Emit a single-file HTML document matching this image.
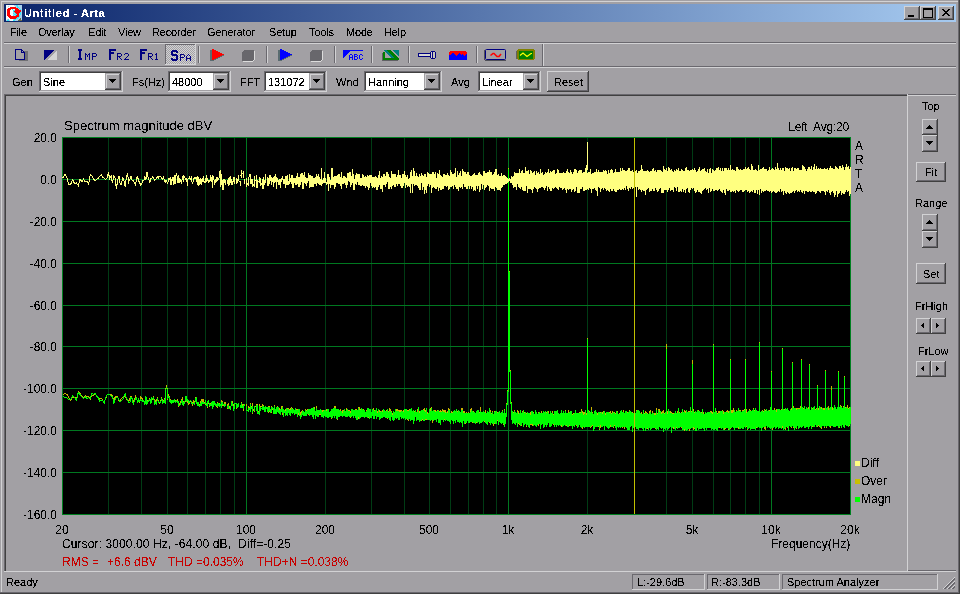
<!DOCTYPE html><html><head><meta charset="utf-8"><style>
html,body{margin:0;padding:0;}
body{width:960px;height:594px;overflow:hidden;position:relative;background:#a2a0a4;font-family:"Liberation Sans",sans-serif;}
div,span,svg{position:absolute;}
span{white-space:pre;}
</style></head><body>
<div style="left:1px;top:1px;width:957px;height:1px;background:#d2d2d4;"></div><div style="left:1px;top:1px;width:1px;height:591px;background:#d2d2d4;"></div><div style="left:958px;top:0px;width:1px;height:593px;background:#6a686e;"></div><div style="left:0px;top:592px;width:959px;height:1px;background:#6a686e;"></div><div style="left:959px;top:0px;width:1px;height:594px;background:#404040;"></div><div style="left:0px;top:593px;width:960px;height:1px;background:#404040;"></div><div style="left:4px;top:4px;width:952px;height:18px;background:linear-gradient(to right,#0a246a,#a6caf0);"></div><svg style="position:absolute;left:6px;top:5px" width="16" height="16" viewBox="0 0 16 16" shape-rendering="crispEdges"><rect x="0" y="0" width="8" height="1" fill="#f4fbff"/><rect x="8" y="0" width="2" height="1" fill="#a8d0ec"/><rect x="10" y="0" width="2" height="1" fill="#30e8f8"/><rect x="12" y="0" width="4" height="1" fill="#a8d0ec"/><rect x="0" y="1" width="2" height="1" fill="#f4fbff"/><rect x="2" y="1" width="1" height="1" fill="#a8d0ec"/><rect x="3" y="1" width="6" height="1" fill="#f4fbff"/><rect x="9" y="1" width="2" height="1" fill="#a8d0ec"/><rect x="11" y="1" width="1" height="1" fill="#30e8f8"/><rect x="12" y="1" width="4" height="1" fill="#a8d0ec"/><rect x="0" y="2" width="4" height="1" fill="#f4fbff"/><rect x="4" y="2" width="6" height="1" fill="#ff0000"/><rect x="10" y="2" width="1" height="1" fill="#a8d0ec"/><rect x="11" y="2" width="2" height="1" fill="#30e8f8"/><rect x="13" y="2" width="3" height="1" fill="#a8d0ec"/><rect x="0" y="3" width="2" height="1" fill="#f4fbff"/><rect x="2" y="3" width="10" height="1" fill="#ff0000"/><rect x="12" y="3" width="1" height="1" fill="#a8d0ec"/><rect x="13" y="3" width="1" height="1" fill="#30e8f8"/><rect x="14" y="3" width="2" height="1" fill="#a8d0ec"/><rect x="0" y="4" width="1" height="1" fill="#f4fbff"/><rect x="1" y="4" width="4" height="1" fill="#ff0000"/><rect x="5" y="4" width="1" height="1" fill="#f4fbff"/><rect x="6" y="4" width="1" height="1" fill="#30e8f8"/><rect x="7" y="4" width="2" height="1" fill="#f4fbff"/><rect x="9" y="4" width="4" height="1" fill="#ff0000"/><rect x="13" y="4" width="1" height="1" fill="#a8d0ec"/><rect x="14" y="4" width="1" height="1" fill="#30e8f8"/><rect x="15" y="4" width="1" height="1" fill="#a8d0ec"/><rect x="0" y="5" width="1" height="1" fill="#f4fbff"/><rect x="1" y="5" width="3" height="1" fill="#ff0000"/><rect x="4" y="5" width="3" height="1" fill="#f4fbff"/><rect x="7" y="5" width="2" height="1" fill="#30e8f8"/><rect x="9" y="5" width="6" height="1" fill="#ff0000"/><rect x="15" y="5" width="1" height="1" fill="#a8d0ec"/><rect x="0" y="6" width="1" height="1" fill="#f4fbff"/><rect x="1" y="6" width="3" height="1" fill="#ff0000"/><rect x="4" y="6" width="3" height="1" fill="#f4fbff"/><rect x="7" y="6" width="1" height="1" fill="#30e8f8"/><rect x="8" y="6" width="7" height="1" fill="#ff0000"/><rect x="15" y="6" width="1" height="1" fill="#a8d0ec"/><rect x="0" y="7" width="1" height="1" fill="#f4fbff"/><rect x="1" y="7" width="3" height="1" fill="#ff0000"/><rect x="4" y="7" width="3" height="1" fill="#f4fbff"/><rect x="7" y="7" width="1" height="1" fill="#a8d0ec"/><rect x="8" y="7" width="1" height="1" fill="#30e8f8"/><rect x="9" y="7" width="5" height="1" fill="#ff0000"/><rect x="14" y="7" width="1" height="1" fill="#30e8f8"/><rect x="15" y="7" width="1" height="1" fill="#a8d0ec"/><rect x="0" y="8" width="1" height="1" fill="#f4fbff"/><rect x="1" y="8" width="3" height="1" fill="#ff0000"/><rect x="4" y="8" width="3" height="1" fill="#f4fbff"/><rect x="7" y="8" width="1" height="1" fill="#30e8f8"/><rect x="8" y="8" width="1" height="1" fill="#a8d0ec"/><rect x="9" y="8" width="1" height="1" fill="#30e8f8"/><rect x="10" y="8" width="3" height="1" fill="#ff0000"/><rect x="13" y="8" width="2" height="1" fill="#30e8f8"/><rect x="15" y="8" width="1" height="1" fill="#a8d0ec"/><rect x="0" y="9" width="1" height="1" fill="#f4fbff"/><rect x="1" y="9" width="3" height="1" fill="#ff0000"/><rect x="4" y="9" width="3" height="1" fill="#f4fbff"/><rect x="7" y="9" width="1" height="1" fill="#a8d0ec"/><rect x="8" y="9" width="3" height="1" fill="#30e8f8"/><rect x="11" y="9" width="2" height="1" fill="#ff0000"/><rect x="13" y="9" width="1" height="1" fill="#a8d0ec"/><rect x="14" y="9" width="1" height="1" fill="#30e8f8"/><rect x="15" y="9" width="1" height="1" fill="#a8d0ec"/><rect x="0" y="10" width="1" height="1" fill="#f4fbff"/><rect x="1" y="10" width="4" height="1" fill="#ff0000"/><rect x="5" y="10" width="2" height="1" fill="#f4fbff"/><rect x="7" y="10" width="1" height="1" fill="#30e8f8"/><rect x="8" y="10" width="1" height="1" fill="#a8d0ec"/><rect x="9" y="10" width="1" height="1" fill="#30e8f8"/><rect x="10" y="10" width="3" height="1" fill="#ff0000"/><rect x="13" y="10" width="1" height="1" fill="#30e8f8"/><rect x="14" y="10" width="2" height="1" fill="#a8d0ec"/><rect x="0" y="11" width="2" height="1" fill="#f4fbff"/><rect x="2" y="11" width="11" height="1" fill="#ff0000"/><rect x="13" y="11" width="1" height="1" fill="#30e8f8"/><rect x="14" y="11" width="2" height="1" fill="#a8d0ec"/><rect x="0" y="12" width="3" height="1" fill="#f4fbff"/><rect x="3" y="12" width="8" height="1" fill="#ff0000"/><rect x="11" y="12" width="2" height="1" fill="#30e8f8"/><rect x="13" y="12" width="3" height="1" fill="#a8d0ec"/><rect x="0" y="13" width="4" height="1" fill="#f4fbff"/><rect x="4" y="13" width="6" height="1" fill="#ff0000"/><rect x="10" y="13" width="2" height="1" fill="#30e8f8"/><rect x="12" y="13" width="2" height="1" fill="#a8d0ec"/><rect x="14" y="13" width="1" height="1" fill="#68684c"/><rect x="15" y="13" width="1" height="1" fill="#a8d0ec"/><rect x="0" y="14" width="1" height="1" fill="#f4fbff"/><rect x="1" y="14" width="1" height="1" fill="#a8d0ec"/><rect x="2" y="14" width="1" height="1" fill="#30e8f8"/><rect x="3" y="14" width="4" height="1" fill="#f4fbff"/><rect x="7" y="14" width="1" height="1" fill="#a8d0ec"/><rect x="8" y="14" width="2" height="1" fill="#30e8f8"/><rect x="10" y="14" width="3" height="1" fill="#a8d0ec"/><rect x="13" y="14" width="2" height="1" fill="#68684c"/><rect x="15" y="14" width="1" height="1" fill="#a8d0ec"/><rect x="0" y="15" width="1" height="1" fill="#a8d0ec"/><rect x="1" y="15" width="2" height="1" fill="#30e8f8"/><rect x="3" y="15" width="1" height="1" fill="#a8d0ec"/><rect x="4" y="15" width="3" height="1" fill="#f4fbff"/><rect x="7" y="15" width="2" height="1" fill="#30e8f8"/><rect x="9" y="15" width="3" height="1" fill="#a8d0ec"/><rect x="12" y="15" width="4" height="1" fill="#68684c"/></svg><div style="left:904px;top:6px;width:16px;height:14px;background:#a2a0a4;"></div><div style="left:904px;top:6px;width:16px;height:1px;background:#d2d2d4;"></div><div style="left:904px;top:6px;width:1px;height:14px;background:#d2d2d4;"></div><div style="left:904px;top:19px;width:16px;height:1px;background:#404040;"></div><div style="left:919px;top:6px;width:1px;height:14px;background:#404040;"></div><div style="left:905px;top:18px;width:14px;height:1px;background:#6a686e;"></div><div style="left:918px;top:7px;width:1px;height:12px;background:#6a686e;"></div><svg style="position:absolute;left:904px;top:6px" width="16" height="14" viewBox="0 0 16 14" shape-rendering="crispEdges"><rect x="4" y="9" width="6" height="2" fill="#000"/></svg><div style="left:920px;top:6px;width:16px;height:14px;background:#a2a0a4;"></div><div style="left:920px;top:6px;width:16px;height:1px;background:#d2d2d4;"></div><div style="left:920px;top:6px;width:1px;height:14px;background:#d2d2d4;"></div><div style="left:920px;top:19px;width:16px;height:1px;background:#404040;"></div><div style="left:935px;top:6px;width:1px;height:14px;background:#404040;"></div><div style="left:921px;top:18px;width:14px;height:1px;background:#6a686e;"></div><div style="left:934px;top:7px;width:1px;height:12px;background:#6a686e;"></div><svg style="position:absolute;left:920px;top:6px" width="16" height="14" viewBox="0 0 16 14" shape-rendering="crispEdges"><rect x="3" y="2" width="9" height="9" fill="none" stroke="#000" stroke-width="1" transform="translate(0.5 0.5)"/><rect x="3" y="2" width="9" height="2" fill="#000"/></svg><div style="left:938px;top:6px;width:16px;height:14px;background:#a2a0a4;"></div><div style="left:938px;top:6px;width:16px;height:1px;background:#d2d2d4;"></div><div style="left:938px;top:6px;width:1px;height:14px;background:#d2d2d4;"></div><div style="left:938px;top:19px;width:16px;height:1px;background:#404040;"></div><div style="left:953px;top:6px;width:1px;height:14px;background:#404040;"></div><div style="left:939px;top:18px;width:14px;height:1px;background:#6a686e;"></div><div style="left:952px;top:7px;width:1px;height:12px;background:#6a686e;"></div><svg style="position:absolute;left:938px;top:6px" width="16" height="14" viewBox="0 0 16 14" shape-rendering="crispEdges"><rect x="4" y="3" width="2" height="1" fill="#000"/><rect x="10" y="3" width="2" height="1" fill="#000"/><rect x="5" y="4" width="2" height="1" fill="#000"/><rect x="9" y="4" width="2" height="1" fill="#000"/><rect x="6" y="5" width="2" height="1" fill="#000"/><rect x="8" y="5" width="2" height="1" fill="#000"/><rect x="7" y="6" width="2" height="1" fill="#000"/><rect x="7" y="6" width="2" height="1" fill="#000"/><rect x="8" y="7" width="2" height="1" fill="#000"/><rect x="6" y="7" width="2" height="1" fill="#000"/><rect x="9" y="8" width="2" height="1" fill="#000"/><rect x="5" y="8" width="2" height="1" fill="#000"/><rect x="10" y="9" width="2" height="1" fill="#000"/><rect x="4" y="9" width="2" height="1" fill="#000"/></svg><div style="left:4px;top:42px;width:952px;height:1px;background:#6a686e;"></div><div style="left:4px;top:43px;width:952px;height:1px;background:#d2d2d4;"></div><div style="left:4px;top:66px;width:952px;height:1px;background:#6a686e;"></div><div style="left:4px;top:67px;width:952px;height:1px;background:#d2d2d4;"></div><div style="left:542px;top:44px;width:1px;height:22px;background:#6a686e;"></div><div style="left:543px;top:44px;width:1px;height:22px;background:#d2d2d4;"></div><div style="left:68px;top:46px;width:1px;height:17px;background:#6a686e;"></div><div style="left:69px;top:46px;width:1px;height:17px;background:#d2d2d4;"></div><div style="left:198px;top:46px;width:1px;height:17px;background:#6a686e;"></div><div style="left:199px;top:46px;width:1px;height:17px;background:#d2d2d4;"></div><div style="left:266px;top:46px;width:1px;height:17px;background:#6a686e;"></div><div style="left:267px;top:46px;width:1px;height:17px;background:#d2d2d4;"></div><div style="left:334px;top:46px;width:1px;height:17px;background:#6a686e;"></div><div style="left:335px;top:46px;width:1px;height:17px;background:#d2d2d4;"></div><div style="left:371px;top:46px;width:1px;height:17px;background:#6a686e;"></div><div style="left:372px;top:46px;width:1px;height:17px;background:#d2d2d4;"></div><div style="left:408px;top:46px;width:1px;height:17px;background:#6a686e;"></div><div style="left:409px;top:46px;width:1px;height:17px;background:#d2d2d4;"></div><div style="left:476px;top:46px;width:1px;height:17px;background:#6a686e;"></div><div style="left:477px;top:46px;width:1px;height:17px;background:#d2d2d4;"></div><svg style="position:absolute;left:0px;top:0px" width="560" height="68" viewBox="0 0 560 68" shape-rendering="crispEdges"><rect x="19" y="51" width="9" height="10" fill="#707074"/><path d="M15.5 49.5 H21.5 L24.5 52.5 V59.5 H15.5 Z" fill="#a2a0a4" stroke="#000080" stroke-width="1"/><path d="M21.5 49.5 V52.5 H24.5" fill="none" stroke="#000080" stroke-width="1"/><path d="M44 50 H54 L44 60 Z" fill="#000080"/><path d="M57 50 V60 H47 Z" fill="#d4d4d4"/><rect x="78" y="49" width="4" height="1" fill="#000080"/><rect x="78" y="50" width="4" height="1" fill="#000080"/><rect x="79" y="51" width="2" height="1" fill="#000080"/><rect x="79" y="52" width="2" height="1" fill="#000080"/><rect x="79" y="53" width="2" height="1" fill="#000080"/><rect x="79" y="54" width="2" height="1" fill="#000080"/><rect x="79" y="55" width="2" height="1" fill="#000080"/><rect x="79" y="56" width="2" height="1" fill="#000080"/><rect x="79" y="57" width="2" height="1" fill="#000080"/><rect x="78" y="58" width="4" height="1" fill="#000080"/><rect x="78" y="59" width="4" height="1" fill="#000080"/><rect x="85" y="53" width="1" height="1" fill="#000080"/><rect x="89" y="53" width="1" height="1" fill="#000080"/><rect x="85" y="54" width="2" height="1" fill="#000080"/><rect x="88" y="54" width="2" height="1" fill="#000080"/><rect x="85" y="55" width="1" height="1" fill="#000080"/><rect x="87" y="55" width="1" height="1" fill="#000080"/><rect x="89" y="55" width="1" height="1" fill="#000080"/><rect x="85" y="56" width="1" height="1" fill="#000080"/><rect x="87" y="56" width="1" height="1" fill="#000080"/><rect x="89" y="56" width="1" height="1" fill="#000080"/><rect x="85" y="57" width="1" height="1" fill="#000080"/><rect x="89" y="57" width="1" height="1" fill="#000080"/><rect x="85" y="58" width="1" height="1" fill="#000080"/><rect x="89" y="58" width="1" height="1" fill="#000080"/><rect x="85" y="59" width="1" height="1" fill="#000080"/><rect x="89" y="59" width="1" height="1" fill="#000080"/><rect x="92" y="53" width="4" height="1" fill="#000080"/><rect x="92" y="54" width="1" height="1" fill="#000080"/><rect x="96" y="54" width="1" height="1" fill="#000080"/><rect x="92" y="55" width="1" height="1" fill="#000080"/><rect x="96" y="55" width="1" height="1" fill="#000080"/><rect x="92" y="56" width="4" height="1" fill="#000080"/><rect x="92" y="57" width="1" height="1" fill="#000080"/><rect x="92" y="58" width="1" height="1" fill="#000080"/><rect x="92" y="59" width="1" height="1" fill="#000080"/><rect x="109" y="49" width="7" height="1" fill="#000080"/><rect x="109" y="50" width="7" height="1" fill="#000080"/><rect x="109" y="51" width="2" height="1" fill="#000080"/><rect x="109" y="52" width="5" height="1" fill="#000080"/><rect x="109" y="53" width="5" height="1" fill="#000080"/><rect x="109" y="54" width="2" height="1" fill="#000080"/><rect x="109" y="55" width="2" height="1" fill="#000080"/><rect x="109" y="56" width="2" height="1" fill="#000080"/><rect x="109" y="57" width="2" height="1" fill="#000080"/><rect x="109" y="58" width="2" height="1" fill="#000080"/><rect x="109" y="59" width="2" height="1" fill="#000080"/><rect x="117" y="53" width="4" height="1" fill="#000080"/><rect x="117" y="54" width="1" height="1" fill="#000080"/><rect x="121" y="54" width="1" height="1" fill="#000080"/><rect x="117" y="55" width="1" height="1" fill="#000080"/><rect x="121" y="55" width="1" height="1" fill="#000080"/><rect x="117" y="56" width="4" height="1" fill="#000080"/><rect x="117" y="57" width="1" height="1" fill="#000080"/><rect x="119" y="57" width="1" height="1" fill="#000080"/><rect x="117" y="58" width="1" height="1" fill="#000080"/><rect x="120" y="58" width="1" height="1" fill="#000080"/><rect x="117" y="59" width="1" height="1" fill="#000080"/><rect x="121" y="59" width="1" height="1" fill="#000080"/><rect x="125" y="53" width="3" height="1" fill="#000080"/><rect x="124" y="54" width="1" height="1" fill="#000080"/><rect x="128" y="54" width="1" height="1" fill="#000080"/><rect x="128" y="55" width="1" height="1" fill="#000080"/><rect x="127" y="56" width="1" height="1" fill="#000080"/><rect x="126" y="57" width="1" height="1" fill="#000080"/><rect x="125" y="58" width="1" height="1" fill="#000080"/><rect x="124" y="59" width="5" height="1" fill="#000080"/><rect x="140" y="49" width="7" height="1" fill="#000080"/><rect x="140" y="50" width="7" height="1" fill="#000080"/><rect x="140" y="51" width="2" height="1" fill="#000080"/><rect x="140" y="52" width="5" height="1" fill="#000080"/><rect x="140" y="53" width="5" height="1" fill="#000080"/><rect x="140" y="54" width="2" height="1" fill="#000080"/><rect x="140" y="55" width="2" height="1" fill="#000080"/><rect x="140" y="56" width="2" height="1" fill="#000080"/><rect x="140" y="57" width="2" height="1" fill="#000080"/><rect x="140" y="58" width="2" height="1" fill="#000080"/><rect x="140" y="59" width="2" height="1" fill="#000080"/><rect x="148" y="53" width="4" height="1" fill="#000080"/><rect x="148" y="54" width="1" height="1" fill="#000080"/><rect x="152" y="54" width="1" height="1" fill="#000080"/><rect x="148" y="55" width="1" height="1" fill="#000080"/><rect x="152" y="55" width="1" height="1" fill="#000080"/><rect x="148" y="56" width="4" height="1" fill="#000080"/><rect x="148" y="57" width="1" height="1" fill="#000080"/><rect x="150" y="57" width="1" height="1" fill="#000080"/><rect x="148" y="58" width="1" height="1" fill="#000080"/><rect x="151" y="58" width="1" height="1" fill="#000080"/><rect x="148" y="59" width="1" height="1" fill="#000080"/><rect x="152" y="59" width="1" height="1" fill="#000080"/><rect x="156" y="53" width="1" height="1" fill="#000080"/><rect x="155" y="54" width="2" height="1" fill="#000080"/><rect x="156" y="55" width="1" height="1" fill="#000080"/><rect x="156" y="56" width="1" height="1" fill="#000080"/><rect x="156" y="57" width="1" height="1" fill="#000080"/><rect x="156" y="58" width="1" height="1" fill="#000080"/><rect x="155" y="59" width="3" height="1" fill="#000080"/></svg><div style="left:165px;top:44px;width:31px;height:21px;background:#c8c6ca;"></div><div style="left:166px;top:45px;width:29px;height:19px;background-image:linear-gradient(45deg,#a2a0a4 25%,transparent 25%,transparent 75%,#a2a0a4 75%),linear-gradient(45deg,#a2a0a4 25%,transparent 25%,transparent 75%,#a2a0a4 75%);background-size:2px 2px;background-position:0 0,1px 1px;background-color:#d2d2d4"></div><div style="left:165px;top:44px;width:31px;height:1px;background:#6a686e;"></div><div style="left:165px;top:44px;width:1px;height:21px;background:#6a686e;"></div><div style="left:165px;top:64px;width:31px;height:1px;background:#d2d2d4;"></div><div style="left:195px;top:44px;width:1px;height:21px;background:#d2d2d4;"></div><svg style="position:absolute;left:0px;top:0px" width="560" height="68" viewBox="0 0 560 68" shape-rendering="crispEdges"><rect x="172" y="50" width="5" height="1" fill="#000080"/><rect x="171" y="51" width="7" height="1" fill="#000080"/><rect x="171" y="52" width="2" height="1" fill="#000080"/><rect x="176" y="52" width="2" height="1" fill="#000080"/><rect x="171" y="53" width="2" height="1" fill="#000080"/><rect x="171" y="54" width="6" height="1" fill="#000080"/><rect x="172" y="55" width="6" height="1" fill="#000080"/><rect x="176" y="56" width="2" height="1" fill="#000080"/><rect x="176" y="57" width="2" height="1" fill="#000080"/><rect x="171" y="58" width="2" height="1" fill="#000080"/><rect x="176" y="58" width="2" height="1" fill="#000080"/><rect x="171" y="59" width="7" height="1" fill="#000080"/><rect x="172" y="60" width="5" height="1" fill="#000080"/><rect x="180" y="54" width="4" height="1" fill="#000080"/><rect x="180" y="55" width="1" height="1" fill="#000080"/><rect x="184" y="55" width="1" height="1" fill="#000080"/><rect x="180" y="56" width="1" height="1" fill="#000080"/><rect x="184" y="56" width="1" height="1" fill="#000080"/><rect x="180" y="57" width="4" height="1" fill="#000080"/><rect x="180" y="58" width="1" height="1" fill="#000080"/><rect x="180" y="59" width="1" height="1" fill="#000080"/><rect x="180" y="60" width="1" height="1" fill="#000080"/><rect x="188" y="54" width="1" height="1" fill="#000080"/><rect x="187" y="55" width="1" height="1" fill="#000080"/><rect x="189" y="55" width="1" height="1" fill="#000080"/><rect x="186" y="56" width="1" height="1" fill="#000080"/><rect x="190" y="56" width="1" height="1" fill="#000080"/><rect x="186" y="57" width="1" height="1" fill="#000080"/><rect x="190" y="57" width="1" height="1" fill="#000080"/><rect x="186" y="58" width="5" height="1" fill="#000080"/><rect x="186" y="59" width="1" height="1" fill="#000080"/><rect x="190" y="59" width="1" height="1" fill="#000080"/><rect x="186" y="60" width="1" height="1" fill="#000080"/><rect x="190" y="60" width="1" height="1" fill="#000080"/><rect x="210" y="50" width="2" height="1" fill="#5a6c70"/><rect x="210" y="51" width="2" height="1" fill="#5a6c70"/><rect x="210" y="52" width="2" height="1" fill="#5a6c70"/><rect x="210" y="53" width="2" height="1" fill="#5a6c70"/><rect x="210" y="54" width="2" height="1" fill="#5a6c70"/><rect x="210" y="55" width="2" height="1" fill="#5a6c70"/><rect x="222" y="55" width="2" height="1" fill="#5a6c70"/><rect x="210" y="56" width="2" height="1" fill="#5a6c70"/><rect x="220" y="56" width="2" height="1" fill="#5a6c70"/><rect x="210" y="57" width="2" height="1" fill="#5a6c70"/><rect x="218" y="57" width="2" height="1" fill="#5a6c70"/><rect x="210" y="58" width="2" height="1" fill="#5a6c70"/><rect x="216" y="58" width="2" height="1" fill="#5a6c70"/><rect x="210" y="59" width="2" height="1" fill="#5a6c70"/><rect x="214" y="59" width="2" height="1" fill="#5a6c70"/><rect x="210" y="60" width="2" height="1" fill="#5a6c70"/><rect x="212" y="60" width="2" height="1" fill="#5a6c70"/><rect x="210" y="60" width="4" height="1" fill="#5a6c70"/><rect x="212" y="49" width="2" height="1" fill="#ff0000"/><rect x="212" y="50" width="4" height="1" fill="#ff0000"/><rect x="212" y="51" width="6" height="1" fill="#ff0000"/><rect x="212" y="52" width="8" height="1" fill="#ff0000"/><rect x="212" y="53" width="10" height="1" fill="#ff0000"/><rect x="212" y="54" width="12" height="1" fill="#ff0000"/><rect x="212" y="55" width="10" height="1" fill="#ff0000"/><rect x="212" y="56" width="8" height="1" fill="#ff0000"/><rect x="212" y="57" width="6" height="1" fill="#ff0000"/><rect x="212" y="58" width="4" height="1" fill="#ff0000"/><rect x="212" y="59" width="2" height="1" fill="#ff0000"/><rect x="254" y="51" width="1" height="9" fill="#dcdcdc"/><rect x="243" y="61" width="10" height="1" fill="#dcdcdc"/><rect x="253" y="60" width="1" height="1" fill="#dcdcdc"/><path d="M244 50 H254 V60 H253 V61 H242 V52 H243 V51 H244 Z" fill="#68676c"/><rect x="278" y="50" width="2" height="1" fill="#5a6c70"/><rect x="278" y="51" width="2" height="1" fill="#5a6c70"/><rect x="278" y="52" width="2" height="1" fill="#5a6c70"/><rect x="278" y="53" width="2" height="1" fill="#5a6c70"/><rect x="278" y="54" width="2" height="1" fill="#5a6c70"/><rect x="278" y="55" width="2" height="1" fill="#5a6c70"/><rect x="290" y="55" width="2" height="1" fill="#5a6c70"/><rect x="278" y="56" width="2" height="1" fill="#5a6c70"/><rect x="288" y="56" width="2" height="1" fill="#5a6c70"/><rect x="278" y="57" width="2" height="1" fill="#5a6c70"/><rect x="286" y="57" width="2" height="1" fill="#5a6c70"/><rect x="278" y="58" width="2" height="1" fill="#5a6c70"/><rect x="284" y="58" width="2" height="1" fill="#5a6c70"/><rect x="278" y="59" width="2" height="1" fill="#5a6c70"/><rect x="282" y="59" width="2" height="1" fill="#5a6c70"/><rect x="278" y="60" width="2" height="1" fill="#5a6c70"/><rect x="280" y="60" width="2" height="1" fill="#5a6c70"/><rect x="278" y="60" width="4" height="1" fill="#5a6c70"/><rect x="280" y="49" width="2" height="1" fill="#0000ff"/><rect x="280" y="50" width="4" height="1" fill="#0000ff"/><rect x="280" y="51" width="6" height="1" fill="#0000ff"/><rect x="280" y="52" width="8" height="1" fill="#0000ff"/><rect x="280" y="53" width="10" height="1" fill="#0000ff"/><rect x="280" y="54" width="12" height="1" fill="#0000ff"/><rect x="280" y="55" width="10" height="1" fill="#0000ff"/><rect x="280" y="56" width="8" height="1" fill="#0000ff"/><rect x="280" y="57" width="6" height="1" fill="#0000ff"/><rect x="280" y="58" width="4" height="1" fill="#0000ff"/><rect x="280" y="59" width="2" height="1" fill="#0000ff"/><rect x="322" y="51" width="1" height="9" fill="#dcdcdc"/><rect x="311" y="61" width="10" height="1" fill="#dcdcdc"/><rect x="321" y="60" width="1" height="1" fill="#dcdcdc"/><path d="M312 50 H322 V60 H321 V61 H310 V52 H311 V51 H312 Z" fill="#68676c"/><rect x="343" y="50" width="20" height="1" fill="#0000ff"/><path d="M343 50 H351 L343 58 Z" fill="#0000ff"/><rect x="350" y="54" width="2" height="1" fill="#0000ff"/><rect x="349" y="55" width="1" height="1" fill="#0000ff"/><rect x="352" y="55" width="1" height="1" fill="#0000ff"/><rect x="349" y="56" width="1" height="1" fill="#0000ff"/><rect x="352" y="56" width="1" height="1" fill="#0000ff"/><rect x="349" y="57" width="4" height="1" fill="#0000ff"/><rect x="349" y="58" width="1" height="1" fill="#0000ff"/><rect x="352" y="58" width="1" height="1" fill="#0000ff"/><rect x="349" y="59" width="1" height="1" fill="#0000ff"/><rect x="352" y="59" width="1" height="1" fill="#0000ff"/><rect x="354" y="54" width="3" height="1" fill="#0000ff"/><rect x="354" y="55" width="1" height="1" fill="#0000ff"/><rect x="357" y="55" width="1" height="1" fill="#0000ff"/><rect x="354" y="56" width="3" height="1" fill="#0000ff"/><rect x="354" y="57" width="1" height="1" fill="#0000ff"/><rect x="357" y="57" width="1" height="1" fill="#0000ff"/><rect x="354" y="58" width="1" height="1" fill="#0000ff"/><rect x="357" y="58" width="1" height="1" fill="#0000ff"/><rect x="354" y="59" width="3" height="1" fill="#0000ff"/><rect x="360" y="54" width="2" height="1" fill="#0000ff"/><rect x="359" y="55" width="1" height="1" fill="#0000ff"/><rect x="362" y="55" width="1" height="1" fill="#0000ff"/><rect x="359" y="56" width="1" height="1" fill="#0000ff"/><rect x="359" y="57" width="1" height="1" fill="#0000ff"/><rect x="359" y="58" width="1" height="1" fill="#0000ff"/><rect x="362" y="58" width="1" height="1" fill="#0000ff"/><rect x="360" y="59" width="2" height="1" fill="#0000ff"/><path d="M382 53 H383 V60 H398 V61 H382 Z" fill="#606064"/><path d="M392 50 H399 V57 Z" fill="#008080"/><path d="M383 50 H386 L394 58 H391 L383 50 Z" fill="#008080"/><path d="M387 50 H390 L399 59 V60 H396 Z" fill="#008000"/><path d="M383 52 H385 V58 H397 L399 60 H383 Z" fill="#008000"/><rect x="418" y="53" width="13" height="4" fill="#000080"/><rect x="419" y="54" width="11" height="2" fill="#d8d8d0"/><rect x="431" y="51" width="4" height="8" fill="#000080"/><rect x="430" y="52" width="6" height="6" fill="#000080"/><rect x="431" y="52" width="1" height="6" fill="#d8d8d0"/><rect x="433" y="52" width="2" height="6" fill="#c8c8b8"/><rect x="450" y="51" width="16" height="1" fill="#ff0000"/><rect x="449" y="52" width="18" height="8" fill="#ff0000"/><rect x="449" y="55" width="1" height="5" fill="#0000ff"/><rect x="450" y="55" width="1" height="5" fill="#0000ff"/><rect x="451" y="54" width="1" height="6" fill="#0000ff"/><rect x="452" y="53" width="1" height="7" fill="#0000ff"/><rect x="453" y="53" width="1" height="7" fill="#0000ff"/><rect x="454" y="54" width="1" height="6" fill="#0000ff"/><rect x="455" y="55" width="1" height="5" fill="#0000ff"/><rect x="456" y="56" width="1" height="4" fill="#0000ff"/><rect x="457" y="55" width="1" height="5" fill="#0000ff"/><rect x="458" y="54" width="1" height="6" fill="#0000ff"/><rect x="459" y="53" width="1" height="7" fill="#0000ff"/><rect x="460" y="54" width="1" height="6" fill="#0000ff"/><rect x="461" y="55" width="1" height="5" fill="#0000ff"/><rect x="462" y="54" width="1" height="6" fill="#0000ff"/><rect x="463" y="55" width="1" height="5" fill="#0000ff"/><rect x="464" y="56" width="1" height="4" fill="#0000ff"/><rect x="465" y="55" width="1" height="5" fill="#0000ff"/><rect x="466" y="54" width="1" height="6" fill="#0000ff"/><rect x="484" y="50" width="1" height="10" fill="#505058"/><rect x="485" y="60" width="21" height="1" fill="#505058"/><rect x="485.5" y="49.5" width="20" height="10" rx="1" fill="none" stroke="#000080" stroke-width="1" shape-rendering="auto"/><path d="M490.5 55.5 L493 53.5 L494 53.5 L497 56.5 L499 56.5 L501 54" fill="none" stroke="#ff0000" stroke-width="1.6" shape-rendering="auto"/><rect x="516" y="51" width="1" height="8" fill="#606064"/><path d="M518 49 H533 L535 51 V58 L533 60 H518 L517 59 V50 Z" fill="#808000"/><rect x="519" y="51" width="14" height="8" fill="#008000"/><path d="M520 55.5 L523 53 L527 56.5 L531 53.5 L532 53.5" fill="none" stroke="#ffff00" stroke-width="1.2" shape-rendering="auto"/></svg><div style="left:41px;top:73px;width:80px;height:17px;background:#fff;"></div><div style="left:39px;top:71px;width:84px;height:1px;background:#6a686e;"></div><div style="left:39px;top:71px;width:1px;height:21px;background:#6a686e;"></div><div style="left:39px;top:91px;width:84px;height:1px;background:#d2d2d4;"></div><div style="left:122px;top:71px;width:1px;height:21px;background:#d2d2d4;"></div><div style="left:40px;top:72px;width:82px;height:1px;background:#404040;"></div><div style="left:40px;top:72px;width:1px;height:19px;background:#404040;"></div><div style="left:40px;top:90px;width:82px;height:1px;background:#a2a0a4;"></div><div style="left:121px;top:72px;width:1px;height:19px;background:#a2a0a4;"></div><div style="left:105px;top:73px;width:16px;height:17px;background:#a2a0a4;"></div><div style="left:105px;top:73px;width:16px;height:1px;background:#a2a0a4;"></div><div style="left:105px;top:73px;width:1px;height:17px;background:#a2a0a4;"></div><div style="left:106px;top:74px;width:14px;height:1px;background:#d2d2d4;"></div><div style="left:106px;top:74px;width:1px;height:15px;background:#d2d2d4;"></div><div style="left:105px;top:89px;width:16px;height:1px;background:#404040;"></div><div style="left:120px;top:73px;width:1px;height:17px;background:#404040;"></div><div style="left:106px;top:88px;width:14px;height:1px;background:#6a686e;"></div><div style="left:119px;top:74px;width:1px;height:15px;background:#6a686e;"></div><svg style="position:absolute;left:109px;top:79px" width="7" height="4" viewBox="0 0 7 4" shape-rendering="crispEdges"><rect x="0" y="0" width="7" height="1" fill="#000"/><rect x="1" y="1" width="5" height="1" fill="#000"/><rect x="2" y="2" width="3" height="1" fill="#000"/><rect x="3" y="3" width="1" height="1" fill="#000"/></svg><div style="left:170px;top:73px;width:59px;height:17px;background:#fff;"></div><div style="left:168px;top:71px;width:63px;height:1px;background:#6a686e;"></div><div style="left:168px;top:71px;width:1px;height:21px;background:#6a686e;"></div><div style="left:168px;top:91px;width:63px;height:1px;background:#d2d2d4;"></div><div style="left:230px;top:71px;width:1px;height:21px;background:#d2d2d4;"></div><div style="left:169px;top:72px;width:61px;height:1px;background:#404040;"></div><div style="left:169px;top:72px;width:1px;height:19px;background:#404040;"></div><div style="left:169px;top:90px;width:61px;height:1px;background:#a2a0a4;"></div><div style="left:229px;top:72px;width:1px;height:19px;background:#a2a0a4;"></div><div style="left:213px;top:73px;width:16px;height:17px;background:#a2a0a4;"></div><div style="left:213px;top:73px;width:16px;height:1px;background:#a2a0a4;"></div><div style="left:213px;top:73px;width:1px;height:17px;background:#a2a0a4;"></div><div style="left:214px;top:74px;width:14px;height:1px;background:#d2d2d4;"></div><div style="left:214px;top:74px;width:1px;height:15px;background:#d2d2d4;"></div><div style="left:213px;top:89px;width:16px;height:1px;background:#404040;"></div><div style="left:228px;top:73px;width:1px;height:17px;background:#404040;"></div><div style="left:214px;top:88px;width:14px;height:1px;background:#6a686e;"></div><div style="left:227px;top:74px;width:1px;height:15px;background:#6a686e;"></div><svg style="position:absolute;left:217px;top:79px" width="7" height="4" viewBox="0 0 7 4" shape-rendering="crispEdges"><rect x="0" y="0" width="7" height="1" fill="#000"/><rect x="1" y="1" width="5" height="1" fill="#000"/><rect x="2" y="2" width="3" height="1" fill="#000"/><rect x="3" y="3" width="1" height="1" fill="#000"/></svg><div style="left:266px;top:73px;width:59px;height:17px;background:#fff;"></div><div style="left:264px;top:71px;width:63px;height:1px;background:#6a686e;"></div><div style="left:264px;top:71px;width:1px;height:21px;background:#6a686e;"></div><div style="left:264px;top:91px;width:63px;height:1px;background:#d2d2d4;"></div><div style="left:326px;top:71px;width:1px;height:21px;background:#d2d2d4;"></div><div style="left:265px;top:72px;width:61px;height:1px;background:#404040;"></div><div style="left:265px;top:72px;width:1px;height:19px;background:#404040;"></div><div style="left:265px;top:90px;width:61px;height:1px;background:#a2a0a4;"></div><div style="left:325px;top:72px;width:1px;height:19px;background:#a2a0a4;"></div><div style="left:309px;top:73px;width:16px;height:17px;background:#a2a0a4;"></div><div style="left:309px;top:73px;width:16px;height:1px;background:#a2a0a4;"></div><div style="left:309px;top:73px;width:1px;height:17px;background:#a2a0a4;"></div><div style="left:310px;top:74px;width:14px;height:1px;background:#d2d2d4;"></div><div style="left:310px;top:74px;width:1px;height:15px;background:#d2d2d4;"></div><div style="left:309px;top:89px;width:16px;height:1px;background:#404040;"></div><div style="left:324px;top:73px;width:1px;height:17px;background:#404040;"></div><div style="left:310px;top:88px;width:14px;height:1px;background:#6a686e;"></div><div style="left:323px;top:74px;width:1px;height:15px;background:#6a686e;"></div><svg style="position:absolute;left:313px;top:79px" width="7" height="4" viewBox="0 0 7 4" shape-rendering="crispEdges"><rect x="0" y="0" width="7" height="1" fill="#000"/><rect x="1" y="1" width="5" height="1" fill="#000"/><rect x="2" y="2" width="3" height="1" fill="#000"/><rect x="3" y="3" width="1" height="1" fill="#000"/></svg><div style="left:366px;top:73px;width:74px;height:17px;background:#fff;"></div><div style="left:364px;top:71px;width:78px;height:1px;background:#6a686e;"></div><div style="left:364px;top:71px;width:1px;height:21px;background:#6a686e;"></div><div style="left:364px;top:91px;width:78px;height:1px;background:#d2d2d4;"></div><div style="left:441px;top:71px;width:1px;height:21px;background:#d2d2d4;"></div><div style="left:365px;top:72px;width:76px;height:1px;background:#404040;"></div><div style="left:365px;top:72px;width:1px;height:19px;background:#404040;"></div><div style="left:365px;top:90px;width:76px;height:1px;background:#a2a0a4;"></div><div style="left:440px;top:72px;width:1px;height:19px;background:#a2a0a4;"></div><div style="left:424px;top:73px;width:16px;height:17px;background:#a2a0a4;"></div><div style="left:424px;top:73px;width:16px;height:1px;background:#a2a0a4;"></div><div style="left:424px;top:73px;width:1px;height:17px;background:#a2a0a4;"></div><div style="left:425px;top:74px;width:14px;height:1px;background:#d2d2d4;"></div><div style="left:425px;top:74px;width:1px;height:15px;background:#d2d2d4;"></div><div style="left:424px;top:89px;width:16px;height:1px;background:#404040;"></div><div style="left:439px;top:73px;width:1px;height:17px;background:#404040;"></div><div style="left:425px;top:88px;width:14px;height:1px;background:#6a686e;"></div><div style="left:438px;top:74px;width:1px;height:15px;background:#6a686e;"></div><svg style="position:absolute;left:428px;top:79px" width="7" height="4" viewBox="0 0 7 4" shape-rendering="crispEdges"><rect x="0" y="0" width="7" height="1" fill="#000"/><rect x="1" y="1" width="5" height="1" fill="#000"/><rect x="2" y="2" width="3" height="1" fill="#000"/><rect x="3" y="3" width="1" height="1" fill="#000"/></svg><div style="left:480px;top:73px;width:59px;height:17px;background:#fff;"></div><div style="left:478px;top:71px;width:63px;height:1px;background:#6a686e;"></div><div style="left:478px;top:71px;width:1px;height:21px;background:#6a686e;"></div><div style="left:478px;top:91px;width:63px;height:1px;background:#d2d2d4;"></div><div style="left:540px;top:71px;width:1px;height:21px;background:#d2d2d4;"></div><div style="left:479px;top:72px;width:61px;height:1px;background:#404040;"></div><div style="left:479px;top:72px;width:1px;height:19px;background:#404040;"></div><div style="left:479px;top:90px;width:61px;height:1px;background:#a2a0a4;"></div><div style="left:539px;top:72px;width:1px;height:19px;background:#a2a0a4;"></div><div style="left:523px;top:73px;width:16px;height:17px;background:#a2a0a4;"></div><div style="left:523px;top:73px;width:16px;height:1px;background:#a2a0a4;"></div><div style="left:523px;top:73px;width:1px;height:17px;background:#a2a0a4;"></div><div style="left:524px;top:74px;width:14px;height:1px;background:#d2d2d4;"></div><div style="left:524px;top:74px;width:1px;height:15px;background:#d2d2d4;"></div><div style="left:523px;top:89px;width:16px;height:1px;background:#404040;"></div><div style="left:538px;top:73px;width:1px;height:17px;background:#404040;"></div><div style="left:524px;top:88px;width:14px;height:1px;background:#6a686e;"></div><div style="left:537px;top:74px;width:1px;height:15px;background:#6a686e;"></div><svg style="position:absolute;left:527px;top:79px" width="7" height="4" viewBox="0 0 7 4" shape-rendering="crispEdges"><rect x="0" y="0" width="7" height="1" fill="#000"/><rect x="1" y="1" width="5" height="1" fill="#000"/><rect x="2" y="2" width="3" height="1" fill="#000"/><rect x="3" y="3" width="1" height="1" fill="#000"/></svg><div style="left:547px;top:71px;width:42px;height:21px;background:#a2a0a4;"></div><div style="left:547px;top:71px;width:42px;height:1px;background:#d2d2d4;"></div><div style="left:547px;top:71px;width:1px;height:21px;background:#d2d2d4;"></div><div style="left:547px;top:91px;width:42px;height:1px;background:#404040;"></div><div style="left:588px;top:71px;width:1px;height:21px;background:#404040;"></div><div style="left:548px;top:90px;width:40px;height:1px;background:#6a686e;"></div><div style="left:587px;top:72px;width:1px;height:19px;background:#6a686e;"></div><div style="left:4px;top:94px;width:903px;height:1px;background:#6a686e;"></div><div style="left:4px;top:94px;width:1px;height:478px;background:#6a686e;"></div><div style="left:5px;top:95px;width:902px;height:1px;background:#404040;"></div><div style="left:5px;top:95px;width:1px;height:476px;background:#404040;"></div><div style="left:4px;top:571px;width:904px;height:1px;background:#d2d2d4;"></div><div style="left:907px;top:94px;width:1px;height:478px;background:#d2d2d4;"></div><div style="left:908px;top:94px;width:48px;height:1px;background:#6a686e;"></div><div style="left:908px;top:95px;width:48px;height:1px;background:#d2d2d4;"></div><div style="left:908px;top:570px;width:48px;height:1px;background:#6a686e;"></div><div style="left:908px;top:571px;width:48px;height:1px;background:#d2d2d4;"></div><div style="left:922px;top:119px;width:16px;height:16px;background:#a2a0a4;"></div><div style="left:922px;top:119px;width:16px;height:1px;background:#d2d2d4;"></div><div style="left:922px;top:119px;width:1px;height:16px;background:#d2d2d4;"></div><div style="left:922px;top:134px;width:16px;height:1px;background:#404040;"></div><div style="left:937px;top:119px;width:1px;height:16px;background:#404040;"></div><div style="left:923px;top:133px;width:14px;height:1px;background:#6a686e;"></div><div style="left:936px;top:120px;width:1px;height:14px;background:#6a686e;"></div><svg style="position:absolute;left:922px;top:119px" width="16" height="16" viewBox="0 0 16 16" shape-rendering="crispEdges"><rect x="7" y="6" width="1" height="1" fill="#000"/><rect x="6" y="7" width="3" height="1" fill="#000"/><rect x="5" y="8" width="5" height="1" fill="#000"/><rect x="4" y="9" width="7" height="1" fill="#000"/></svg><div style="left:922px;top:135px;width:16px;height:17px;background:#a2a0a4;"></div><div style="left:922px;top:135px;width:16px;height:1px;background:#d2d2d4;"></div><div style="left:922px;top:135px;width:1px;height:17px;background:#d2d2d4;"></div><div style="left:922px;top:151px;width:16px;height:1px;background:#404040;"></div><div style="left:937px;top:135px;width:1px;height:17px;background:#404040;"></div><div style="left:923px;top:150px;width:14px;height:1px;background:#6a686e;"></div><div style="left:936px;top:136px;width:1px;height:15px;background:#6a686e;"></div><svg style="position:absolute;left:922px;top:135px" width="16" height="17" viewBox="0 0 16 17" shape-rendering="crispEdges"><rect x="4" y="6" width="7" height="1" fill="#000"/><rect x="5" y="7" width="5" height="1" fill="#000"/><rect x="6" y="8" width="3" height="1" fill="#000"/><rect x="7" y="9" width="1" height="1" fill="#000"/></svg><div style="left:916px;top:162px;width:30px;height:20px;background:#a2a0a4;"></div><div style="left:916px;top:162px;width:30px;height:1px;background:#d2d2d4;"></div><div style="left:916px;top:162px;width:1px;height:20px;background:#d2d2d4;"></div><div style="left:916px;top:181px;width:30px;height:1px;background:#404040;"></div><div style="left:945px;top:162px;width:1px;height:20px;background:#404040;"></div><div style="left:917px;top:180px;width:28px;height:1px;background:#6a686e;"></div><div style="left:944px;top:163px;width:1px;height:18px;background:#6a686e;"></div><div style="left:922px;top:214px;width:16px;height:17px;background:#a2a0a4;"></div><div style="left:922px;top:214px;width:16px;height:1px;background:#d2d2d4;"></div><div style="left:922px;top:214px;width:1px;height:17px;background:#d2d2d4;"></div><div style="left:922px;top:230px;width:16px;height:1px;background:#404040;"></div><div style="left:937px;top:214px;width:1px;height:17px;background:#404040;"></div><div style="left:923px;top:229px;width:14px;height:1px;background:#6a686e;"></div><div style="left:936px;top:215px;width:1px;height:15px;background:#6a686e;"></div><svg style="position:absolute;left:922px;top:214px" width="16" height="17" viewBox="0 0 16 17" shape-rendering="crispEdges"><rect x="7" y="6" width="1" height="1" fill="#000"/><rect x="6" y="7" width="3" height="1" fill="#000"/><rect x="5" y="8" width="5" height="1" fill="#000"/><rect x="4" y="9" width="7" height="1" fill="#000"/></svg><div style="left:922px;top:231px;width:16px;height:17px;background:#a2a0a4;"></div><div style="left:922px;top:231px;width:16px;height:1px;background:#d2d2d4;"></div><div style="left:922px;top:231px;width:1px;height:17px;background:#d2d2d4;"></div><div style="left:922px;top:247px;width:16px;height:1px;background:#404040;"></div><div style="left:937px;top:231px;width:1px;height:17px;background:#404040;"></div><div style="left:923px;top:246px;width:14px;height:1px;background:#6a686e;"></div><div style="left:936px;top:232px;width:1px;height:15px;background:#6a686e;"></div><svg style="position:absolute;left:922px;top:231px" width="16" height="17" viewBox="0 0 16 17" shape-rendering="crispEdges"><rect x="4" y="6" width="7" height="1" fill="#000"/><rect x="5" y="7" width="5" height="1" fill="#000"/><rect x="6" y="8" width="3" height="1" fill="#000"/><rect x="7" y="9" width="1" height="1" fill="#000"/></svg><div style="left:916px;top:263px;width:30px;height:21px;background:#a2a0a4;"></div><div style="left:916px;top:263px;width:30px;height:1px;background:#d2d2d4;"></div><div style="left:916px;top:263px;width:1px;height:21px;background:#d2d2d4;"></div><div style="left:916px;top:283px;width:30px;height:1px;background:#404040;"></div><div style="left:945px;top:263px;width:1px;height:21px;background:#404040;"></div><div style="left:917px;top:282px;width:28px;height:1px;background:#6a686e;"></div><div style="left:944px;top:264px;width:1px;height:19px;background:#6a686e;"></div><div style="left:916px;top:318px;width:15px;height:16px;background:#a2a0a4;"></div><div style="left:916px;top:318px;width:15px;height:1px;background:#d2d2d4;"></div><div style="left:916px;top:318px;width:1px;height:16px;background:#d2d2d4;"></div><div style="left:916px;top:333px;width:15px;height:1px;background:#404040;"></div><div style="left:930px;top:318px;width:1px;height:16px;background:#404040;"></div><div style="left:917px;top:332px;width:13px;height:1px;background:#6a686e;"></div><div style="left:929px;top:319px;width:1px;height:14px;background:#6a686e;"></div><svg style="position:absolute;left:916px;top:318px" width="15" height="16" viewBox="0 0 15 16" shape-rendering="crispEdges"><rect x="5" y="7" width="1" height="1" fill="#000"/><rect x="6" y="6" width="1" height="3" fill="#000"/><rect x="7" y="5" width="1" height="5" fill="#000"/></svg><div style="left:931px;top:318px;width:15px;height:16px;background:#a2a0a4;"></div><div style="left:931px;top:318px;width:15px;height:1px;background:#d2d2d4;"></div><div style="left:931px;top:318px;width:1px;height:16px;background:#d2d2d4;"></div><div style="left:931px;top:333px;width:15px;height:1px;background:#404040;"></div><div style="left:945px;top:318px;width:1px;height:16px;background:#404040;"></div><div style="left:932px;top:332px;width:13px;height:1px;background:#6a686e;"></div><div style="left:944px;top:319px;width:1px;height:14px;background:#6a686e;"></div><svg style="position:absolute;left:931px;top:318px" width="15" height="16" viewBox="0 0 15 16" shape-rendering="crispEdges"><rect x="5" y="5" width="1" height="5" fill="#000"/><rect x="6" y="6" width="1" height="3" fill="#000"/><rect x="7" y="7" width="1" height="1" fill="#000"/></svg><div style="left:916px;top:361px;width:15px;height:16px;background:#a2a0a4;"></div><div style="left:916px;top:361px;width:15px;height:1px;background:#d2d2d4;"></div><div style="left:916px;top:361px;width:1px;height:16px;background:#d2d2d4;"></div><div style="left:916px;top:376px;width:15px;height:1px;background:#404040;"></div><div style="left:930px;top:361px;width:1px;height:16px;background:#404040;"></div><div style="left:917px;top:375px;width:13px;height:1px;background:#6a686e;"></div><div style="left:929px;top:362px;width:1px;height:14px;background:#6a686e;"></div><svg style="position:absolute;left:916px;top:361px" width="15" height="16" viewBox="0 0 15 16" shape-rendering="crispEdges"><rect x="5" y="7" width="1" height="1" fill="#000"/><rect x="6" y="6" width="1" height="3" fill="#000"/><rect x="7" y="5" width="1" height="5" fill="#000"/></svg><div style="left:931px;top:361px;width:15px;height:16px;background:#a2a0a4;"></div><div style="left:931px;top:361px;width:15px;height:1px;background:#d2d2d4;"></div><div style="left:931px;top:361px;width:1px;height:16px;background:#d2d2d4;"></div><div style="left:931px;top:376px;width:15px;height:1px;background:#404040;"></div><div style="left:945px;top:361px;width:1px;height:16px;background:#404040;"></div><div style="left:932px;top:375px;width:13px;height:1px;background:#6a686e;"></div><div style="left:944px;top:362px;width:1px;height:14px;background:#6a686e;"></div><svg style="position:absolute;left:931px;top:361px" width="15" height="16" viewBox="0 0 15 16" shape-rendering="crispEdges"><rect x="5" y="5" width="1" height="5" fill="#000"/><rect x="6" y="6" width="1" height="3" fill="#000"/><rect x="7" y="7" width="1" height="1" fill="#000"/></svg><div style="left:632px;top:574px;width:73px;height:1px;background:#6a686e;"></div><div style="left:632px;top:574px;width:1px;height:16px;background:#6a686e;"></div><div style="left:632px;top:589px;width:73px;height:1px;background:#d2d2d4;"></div><div style="left:704px;top:574px;width:1px;height:16px;background:#d2d2d4;"></div><div style="left:707px;top:574px;width:73px;height:1px;background:#6a686e;"></div><div style="left:707px;top:574px;width:1px;height:16px;background:#6a686e;"></div><div style="left:707px;top:589px;width:73px;height:1px;background:#d2d2d4;"></div><div style="left:779px;top:574px;width:1px;height:16px;background:#d2d2d4;"></div><div style="left:782px;top:574px;width:156px;height:1px;background:#6a686e;"></div><div style="left:782px;top:574px;width:1px;height:16px;background:#6a686e;"></div><div style="left:782px;top:589px;width:156px;height:1px;background:#d2d2d4;"></div><div style="left:937px;top:574px;width:1px;height:16px;background:#d2d2d4;"></div><svg style="position:absolute;left:0px;top:0px" width="960" height="594" viewBox="0 0 960 594" shape-rendering="crispEdges"><rect x="943" y="588" width="1" height="1" fill="#d2d2d4"/><rect x="944" y="587" width="1" height="1" fill="#d2d2d4"/><rect x="945" y="586" width="1" height="1" fill="#d2d2d4"/><rect x="946" y="585" width="1" height="1" fill="#d2d2d4"/><rect x="947" y="584" width="1" height="1" fill="#d2d2d4"/><rect x="948" y="583" width="1" height="1" fill="#d2d2d4"/><rect x="949" y="582" width="1" height="1" fill="#d2d2d4"/><rect x="950" y="581" width="1" height="1" fill="#d2d2d4"/><rect x="951" y="580" width="1" height="1" fill="#d2d2d4"/><rect x="952" y="579" width="1" height="1" fill="#d2d2d4"/><rect x="953" y="578" width="1" height="1" fill="#d2d2d4"/><rect x="954" y="577" width="1" height="1" fill="#d2d2d4"/><rect x="944" y="588" width="2" height="1" fill="#6a686e"/><rect x="945" y="587" width="2" height="1" fill="#6a686e"/><rect x="946" y="586" width="2" height="1" fill="#6a686e"/><rect x="947" y="585" width="2" height="1" fill="#6a686e"/><rect x="948" y="584" width="2" height="1" fill="#6a686e"/><rect x="949" y="583" width="2" height="1" fill="#6a686e"/><rect x="950" y="582" width="2" height="1" fill="#6a686e"/><rect x="951" y="581" width="2" height="1" fill="#6a686e"/><rect x="952" y="580" width="2" height="1" fill="#6a686e"/><rect x="953" y="579" width="2" height="1" fill="#6a686e"/><rect x="954" y="578" width="1" height="1" fill="#6a686e"/><rect x="947" y="588" width="1" height="1" fill="#d2d2d4"/><rect x="948" y="587" width="1" height="1" fill="#d2d2d4"/><rect x="949" y="586" width="1" height="1" fill="#d2d2d4"/><rect x="950" y="585" width="1" height="1" fill="#d2d2d4"/><rect x="951" y="584" width="1" height="1" fill="#d2d2d4"/><rect x="952" y="583" width="1" height="1" fill="#d2d2d4"/><rect x="953" y="582" width="1" height="1" fill="#d2d2d4"/><rect x="954" y="581" width="1" height="1" fill="#d2d2d4"/><rect x="948" y="588" width="2" height="1" fill="#6a686e"/><rect x="949" y="587" width="2" height="1" fill="#6a686e"/><rect x="950" y="586" width="2" height="1" fill="#6a686e"/><rect x="951" y="585" width="2" height="1" fill="#6a686e"/><rect x="952" y="584" width="2" height="1" fill="#6a686e"/><rect x="953" y="583" width="2" height="1" fill="#6a686e"/><rect x="954" y="582" width="1" height="1" fill="#6a686e"/><rect x="951" y="588" width="1" height="1" fill="#d2d2d4"/><rect x="952" y="587" width="1" height="1" fill="#d2d2d4"/><rect x="953" y="586" width="1" height="1" fill="#d2d2d4"/><rect x="954" y="585" width="1" height="1" fill="#d2d2d4"/><rect x="952" y="588" width="2" height="1" fill="#6a686e"/><rect x="953" y="587" width="2" height="1" fill="#6a686e"/><rect x="954" y="586" width="1" height="1" fill="#6a686e"/></svg><svg style="position:absolute;left:62px;top:137px" width="789" height="378" viewBox="0 0 789 378" shape-rendering="crispEdges"><rect x="0" y="0" width="789" height="378" fill="#000"/><rect x="46" y="0" width="1" height="378" fill="#003c14"/><rect x="79" y="0" width="1" height="378" fill="#003c14"/><rect x="105" y="0" width="1" height="378" fill="#003c14"/><rect x="125" y="0" width="1" height="378" fill="#003c14"/><rect x="143" y="0" width="1" height="378" fill="#003c14"/><rect x="158" y="0" width="1" height="378" fill="#003c14"/><rect x="172" y="0" width="1" height="378" fill="#003c14"/><rect x="184" y="0" width="1" height="378" fill="#007820"/><rect x="263" y="0" width="1" height="378" fill="#003c14"/><rect x="309" y="0" width="1" height="378" fill="#003c14"/><rect x="342" y="0" width="1" height="378" fill="#003c14"/><rect x="367" y="0" width="1" height="378" fill="#003c14"/><rect x="388" y="0" width="1" height="378" fill="#003c14"/><rect x="406" y="0" width="1" height="378" fill="#003c14"/><rect x="421" y="0" width="1" height="378" fill="#003c14"/><rect x="434" y="0" width="1" height="378" fill="#003c14"/><rect x="446" y="0" width="1" height="378" fill="#007820"/><rect x="525" y="0" width="1" height="378" fill="#003c14"/><rect x="572" y="0" width="1" height="378" fill="#003c14"/><rect x="604" y="0" width="1" height="378" fill="#003c14"/><rect x="630" y="0" width="1" height="378" fill="#003c14"/><rect x="651" y="0" width="1" height="378" fill="#003c14"/><rect x="668" y="0" width="1" height="378" fill="#003c14"/><rect x="683" y="0" width="1" height="378" fill="#003c14"/><rect x="697" y="0" width="1" height="378" fill="#003c14"/><rect x="709" y="0" width="1" height="378" fill="#007820"/><rect x="0" y="42" width="789" height="1" fill="#007820"/><rect x="0" y="84" width="789" height="1" fill="#007820"/><rect x="0" y="126" width="789" height="1" fill="#007820"/><rect x="0" y="168" width="789" height="1" fill="#007820"/><rect x="0" y="209" width="789" height="1" fill="#007820"/><rect x="0" y="251" width="789" height="1" fill="#007820"/><rect x="0" y="293" width="789" height="1" fill="#007820"/><rect x="0" y="335" width="789" height="1" fill="#007820"/><rect x="0.5" y="0.5" width="788" height="377" fill="none" stroke="#008020" stroke-width="1"/><path d="M0.8 257.5 L2.9 256.8 L4.9 257.3 L6.9 260.9 L8.8 263.5 L10.7 260.0 L12.6 260.1 L14.5 262.4 L16.3 254.5 L18.1 256.5 L19.9 259.2 L21.6 260.7 L23.3 258.6 L25.0 260.1 L26.7 259.6 L28.3 262.2 L29.9 257.9 L31.5 258.5 L33.1 255.9 L34.7 259.8 L36.2 260.1 L37.7 261.3 L39.2 261.0 L40.7 263.4 L42.1 265.3 L43.5 262.3 L45.0 258.0 L46.4 257.0 L47.7 257.4 L49.1 257.8 L50.5 258.6 L51.8 264.6 L53.1 260.1 L54.4 259.8 L55.7 259.9 L57.0 263.9 L58.2 263.7 L59.5 261.3 L60.7 260.9 L61.9 260.3 L63.2 258.0 L64.3 262.6 L65.5 262.4 L66.7 264.4 L67.9 261.5 L69.0 259.0 L70.1 261.8 L71.3 264.5 L72.4 262.6 L73.5 259.2 L74.6 261.2 L75.6 264.6 L76.7 261.7 L77.8 265.5 L78.8 260.2 L79.9 261.4 L80.9 263.2 L81.9 264.3 L82.9 266.1 L83.9 259.1 L84.9 264.0 L85.9 263.6 L86.9 263.4 L87.9 261.6 L88.8 263.0 L89.8 262.9 L90.7 262.2 L91.7 260.1 L92.6 266.3 L93.5 263.6 L94.5 265.1 L95.4 260.2 L96.3 263.8 L97.2 266.3 L98.1 264.5 L98.9 263.8 L99.8 261.0 L100.7 263.5 L101.5 264.5 L102.4 262.3 L103.2 265.3 L104.1 249.7 L104.9 248.8 L105.7 262.9 L106.6 258.3 L107.4 259.9 L108.2 264.0 L109.0 262.6 L109.8 265.9 L110.6 264.8 L111.4 265.5 L112.2 264.0 L113.0 263.4 L113.7 263.0 L114.5 263.9 L115.3 262.9 L116.0 264.4 L116.8 268.4 L117.5 266.4 L118.3 267.0 L119.0 263.8 L119.7 263.1 L120.5 260.3 L121.2 268.8 L121.9 264.0 L122.6 267.4 L123.3 263.2 L124.0 261.7 L124.7 263.9 L125.4 264.7 L126.1 263.4 L126.8 267.2 L127.5 265.8 L128.2 264.7 L128.9 264.5 L129.5 265.2 L130.2 268.2 L130.9 266.0 L131.5 263.4 L132.2 264.4 L132.8 264.3 L133.5 263.7 L134.1 260.0 L134.8 265.6 L135.4 268.3 L136.1 265.3 L136.7 267.1 L137.3 267.4 L137.9 268.7 L138.6 266.0 L139.2 267.7 L139.8 261.9 L140.4 266.3 L141.0 262.3 L141.6 264.8 L142.2 266.0 L142.8 266.5 L143.4 265.3 L144.0 267.4 L144.6 265.8 L145.2 270.5 L145.8 265.0 L146.3 263.3 L146.9 266.8 L147.5 268.7 L148.1 266.2 L148.6 267.5 L149.2 266.8 L149.8 265.5 L150.3 263.6 L150.9 269.5 L151.4 267.2 L152.0 265.9 L152.5 265.5 L153.1 266.5 L153.6 267.9 L154.2 269.8 L154.7 268.1 L155.3 265.5 L155.8 269.1 L156.3 268.1 L156.9 265.8 L157.4 269.0 L157.9 268.1 L158.4 268.2 L158.9 266.7 L159.5 271.0 L160.0 263.5 L160.5 267.1 L161.0 268.6 L161.5 267.7 L162.0 266.7 L162.5 269.9 L163.0 265.1 L163.5 268.2 L164.0 267.7M165.5 267 V272M166.0 269.6 L166.5 268.0 L167.0 270.2 L167.4 272.2 L167.9 269.2 L168.4 270.2 L168.9 270.0 L169.3 268.1 L169.8 265.5 L170.3 265.6 L170.8 263.8 L171.2 269.7 L171.7 270.1 L172.2 270.6 L172.6 268.4 L173.1 266.4M174.5 266 V272M174.9 266.7 L175.3 267.1 L175.8 269.0 L176.2 268.7 L176.7 267.5 L177.1 267.9M178.5 268 V271M178.9 270.1 L179.3 269.2 L179.7 265.4 L180.2 268.6M181.5 268 V274M181.9 267.1 L182.3 269.3 L182.7 267.9 L183.1 267.4M184.5 267 V273M184.8 272.2 L185.2 271.5M186.5 269 V274M186.9 269.5 L187.3 271.3M188.5 266 V272M188.9 272.2 L189.3 269.0M190.5 266 V277M190.9 271.1 L191.2 273.9M192.5 270 V275M192.8 271.4 L193.2 268.9M194.5 267 V272M195.5 267 V275M195.8 271.4 L196.2 275.6M197.5 267 V277M198.5 269 V273M198.8 272.0 L199.2 269.0M200.5 267 V272M201.5 268 V272M202.5 270 V275M203.5 269 V273M203.8 272.0 L204.2 270.0M205.5 270 V274M206.5 269 V276M207.5 269 V275M208.5 272 V276M209.5 269 V276M210.5 270 V273M211.5 272 V277M212.5 268 V277M213.5 272 V275M214.5 272 V275M215.5 269 V274M216.5 270 V274M217.5 271 V275M218.5 273 V278M219.5 269 V275M220.5 269 V278M221.5 273 V277M222.5 273 V276M223.5 272 V279M224.5 271 V275M225.5 271 V278M226.5 271 V276M227.5 272 V278M228.5 271 V276M229.5 270 V276M230.5 271 V277M231.5 272 V276M232.5 273 V276M233.5 272 V276M234.5 272 V277M235.5 272 V279M236.5 272 V278M237.5 273 V278M238.5 275 V278M239.5 274 V278M240.5 273 V278M241.5 274 V278M242.5 275 V278M243.5 272 V278M244.5 273 V279M245.5 272 V277M246.5 272 V278M247.5 272 V278M248.5 273 V278M249.5 271 V276M250.5 271 V278M251.5 270 V279M252.5 270 V277M253.5 274 V279M254.5 269 V279M255.5 273 V278M256.5 274 V278M257.5 273 V278M258.5 272 V278M259.5 273 V279M260.5 273 V279M261.5 273 V279M262.5 273 V276M263.5 273 V279M264.5 272 V280M265.5 272 V280M266.5 272 V278M267.5 275 V278M268.5 274 V280M269.5 273 V282M270.5 272 V278M271.5 271 V279M272.5 269 V280M273.5 269 V279M274.5 272 V280M275.5 272 V283M276.5 273 V278M277.5 273 V279M278.5 272 V277M279.5 274 V279M280.5 273 V278M281.5 273 V277M282.5 273 V279M283.5 274 V279M284.5 271 V279M285.5 274 V279M286.5 273 V278M287.5 273 V279M288.5 274 V281M289.5 273 V279M290.5 273 V277M291.5 273 V278M292.5 273 V279M293.5 272 V279M294.5 272 V280M295.5 274 V282M296.5 270 V282M297.5 270 V279M298.5 272 V280M299.5 274 V278M300.5 272 V280M301.5 272 V280M302.5 273 V280M303.5 275 V278M304.5 273 V280M305.5 272 V281M306.5 272 V281M307.5 273 V282M308.5 275 V281M309.5 275 V281M310.5 272 V279M311.5 271 V280M312.5 273 V280M313.5 273 V277M314.5 273 V280M315.5 274 V279M316.5 273 V278M317.5 273 V281M318.5 274 V282M319.5 274 V280M320.5 273 V281M321.5 272 V279M322.5 274 V279M323.5 275 V279M324.5 273 V281M325.5 273 V282M326.5 274 V281M327.5 271 V283M328.5 272 V280M329.5 274 V280M330.5 276 V282M331.5 274 V282M332.5 276 V283M333.5 272 V279M334.5 272 V281M335.5 272 V280M336.5 273 V281M337.5 273 V281M338.5 273 V279M339.5 273 V280M340.5 275 V279M341.5 273 V281M342.5 272 V280M343.5 273 V282M344.5 272 V282M345.5 273 V283M346.5 273 V284M347.5 272 V281M348.5 272 V281M349.5 271 V283M350.5 274 V283M351.5 273 V286M352.5 274 V283M353.5 274 V280M354.5 276 V283M355.5 272 V283M356.5 272 V280M357.5 274 V283M358.5 274 V283M359.5 273 V284M360.5 273 V283M361.5 272 V281M362.5 271 V283M363.5 273 V283M364.5 272 V283M365.5 275 V283M366.5 276 V282M367.5 272 V282M368.5 271 V283M369.5 270 V281M370.5 274 V286M371.5 274 V283M372.5 273 V282M373.5 273 V282M374.5 274 V282M375.5 273 V281M376.5 273 V284M377.5 274 V284M378.5 273 V285M379.5 274 V283M380.5 272 V282M381.5 273 V283M382.5 273 V283M383.5 273 V284M384.5 275 V282M385.5 274 V284M386.5 271 V283M387.5 272 V284M388.5 276 V284M389.5 274 V283M390.5 275 V284M391.5 274 V286M392.5 273 V283M393.5 275 V284M394.5 275 V282M395.5 274 V283M396.5 274 V284M397.5 274 V282M398.5 275 V285M399.5 271 V283M400.5 271 V285M401.5 274 V283M402.5 274 V285M403.5 276 V287M404.5 275 V284M405.5 277 V284M406.5 275 V283M407.5 276 V284M408.5 272 V285M409.5 271 V284M410.5 274 V286M411.5 274 V283M412.5 275 V283M413.5 276 V285M414.5 274 V286M415.5 274 V285M416.5 273 V284M417.5 275 V286M418.5 270 V286M419.5 276 V285M420.5 276 V284M421.5 276 V284M422.5 275 V285M423.5 273 V285M424.5 276 V287M425.5 274 V288M426.5 275 V285M427.5 275 V286M428.5 273 V286M429.5 276 V285M430.5 274 V284M431.5 277 V289M432.5 274 V287M433.5 275 V287M434.5 275 V286M435.5 275 V284M436.5 276 V287M437.5 275 V284M438.5 276 V286M439.5 276 V286M440.5 273 V286M441.5 276 V288M442.5 272 V288M443.5 276 V285M444.5 266 V279M445.5 253 V267M446.5 31 V254M447.5 134 V234M448.5 233 V266M449.5 265 V282M450.5 274 V286M451.5 275 V286M452.5 273 V286M453.5 276 V287M454.5 276 V286M455.5 273 V288M456.5 274 V287M457.5 277 V288M458.5 274 V285M459.5 276 V289M460.5 274 V285M461.5 276 V286M462.5 275 V287M463.5 275 V285M464.5 276 V290M465.5 276 V287M466.5 276 V290M467.5 277 V288M468.5 275 V288M469.5 275 V288M470.5 274 V289M471.5 275 V288M472.5 278 V287M473.5 273 V289M474.5 275 V288M475.5 277 V287M476.5 275 V289M477.5 275 V286M478.5 276 V289M479.5 274 V286M480.5 276 V287M481.5 274 V288M482.5 275 V286M483.5 276 V288M484.5 275 V289M485.5 276 V287M486.5 274 V285M487.5 277 V287M488.5 274 V289M489.5 276 V289M490.5 274 V286M491.5 277 V288M492.5 274 V287M493.5 276 V286M494.5 275 V289M495.5 274 V288M496.5 276 V288M497.5 277 V287M498.5 276 V288M499.5 275 V290M500.5 277 V287M501.5 274 V289M502.5 276 V287M503.5 273 V287M504.5 276 V289M505.5 278 V288M506.5 273 V287M507.5 277 V289M508.5 277 V288M509.5 276 V287M510.5 277 V290M511.5 276 V287M512.5 276 V288M513.5 275 V288M514.5 276 V289M515.5 276 V289M516.5 276 V288M517.5 275 V288M518.5 275 V289M519.5 272 V289M520.5 274 V292M521.5 275 V289M522.5 275 V288M523.5 276 V288M524.5 276 V289M525.5 201 V288M526.5 274 V287M527.5 274 V289M528.5 276 V291M529.5 270 V290M530.5 275 V289M531.5 277 V294M532.5 274 V290M533.5 276 V290M534.5 276 V289M535.5 276 V290M536.5 276 V290M537.5 276 V293M538.5 275 V291M539.5 275 V289M540.5 275 V290M541.5 274 V287M542.5 276 V290M543.5 276 V288M544.5 276 V288M545.5 276 V291M546.5 277 V290M547.5 275 V291M548.5 274 V290M549.5 276 V289M550.5 274 V290M551.5 277 V291M552.5 275 V289M553.5 276 V289M554.5 276 V289M555.5 274 V289M556.5 277 V290M557.5 276 V288M558.5 275 V289M559.5 275 V289M560.5 275 V291M561.5 273 V290M562.5 276 V292M563.5 275 V289M564.5 275 V290M565.5 275 V289M566.5 276 V291M567.5 273 V292M568.5 276 V288M569.5 276 V289M570.5 275 V293M571.5 276 V288M572.5 175 V290M573.5 276 V290M574.5 273 V291M575.5 274 V292M576.5 274 V292M577.5 274 V290M578.5 277 V290M579.5 275 V290M580.5 277 V289M581.5 274 V292M582.5 276 V290M583.5 274 V290M584.5 275 V291M585.5 276 V292M586.5 277 V291M587.5 274 V289M588.5 273 V292M589.5 277 V291M590.5 274 V291M591.5 277 V291M592.5 276 V291M593.5 276 V292M594.5 271 V291M595.5 276 V289M596.5 272 V292M597.5 272 V290M598.5 274 V291M599.5 275 V291M600.5 274 V290M601.5 273 V294M602.5 276 V291M603.5 275 V290M604.5 207 V291M605.5 274 V293M606.5 275 V290M607.5 274 V290M608.5 274 V289M609.5 275 V292M610.5 276 V289M611.5 276 V292M612.5 276 V289M613.5 275 V292M614.5 277 V291M615.5 274 V291M616.5 273 V291M617.5 275 V291M618.5 276 V290M619.5 275 V291M620.5 275 V292M621.5 275 V291M622.5 273 V294M623.5 274 V293M624.5 274 V291M625.5 275 V290M626.5 274 V292M627.5 274 V294M628.5 274 V291M629.5 274 V291M630.5 223 V290M631.5 272 V293M632.5 275 V292M633.5 275 V292M634.5 275 V291M635.5 275 V290M636.5 273 V292M637.5 275 V291M638.5 277 V290M639.5 275 V291M640.5 276 V291M641.5 275 V292M642.5 277 V292M643.5 275 V290M644.5 277 V291M645.5 275 V291M646.5 276 V291M647.5 275 V291M648.5 274 V291M649.5 274 V291M650.5 275 V289M651.5 207 V292M652.5 276 V292M653.5 273 V291M654.5 274 V292M655.5 276 V293M656.5 274 V290M657.5 274 V291M658.5 275 V289M659.5 274 V290M660.5 273 V290M661.5 274 V293M662.5 276 V293M663.5 275 V292M664.5 274 V291M665.5 273 V291M666.5 274 V293M667.5 274 V291M668.5 222 V292M669.5 273 V290M670.5 273 V289M671.5 271 V291M672.5 275 V290M673.5 275 V290M674.5 273 V291M675.5 275 V290M676.5 273 V292M677.5 273 V290M678.5 273 V292M679.5 275 V289M680.5 273 V291M681.5 273 V291M682.5 272 V290M683.5 222 V290M684.5 272 V290M685.5 275 V293M686.5 274 V291M687.5 272 V290M688.5 273 V290M689.5 275 V290M690.5 273 V292M691.5 271 V291M692.5 273 V290M693.5 271 V292M694.5 273 V291M695.5 274 V291M696.5 274 V290M697.5 205 V291M698.5 275 V289M699.5 274 V293M700.5 273 V291M701.5 274 V288M702.5 272 V292M703.5 273 V293M704.5 273 V289M705.5 274 V290M706.5 273 V290M707.5 273 V288M708.5 273 V290M709.5 234 V290M710.5 274 V293M711.5 273 V289M712.5 271 V290M713.5 274 V290M714.5 272 V290M715.5 272 V289M716.5 272 V291M717.5 272 V289M718.5 274 V290M719.5 272 V290M720.5 211 V291M721.5 272 V291M722.5 272 V290M723.5 273 V293M724.5 273 V290M725.5 271 V291M726.5 273 V291M727.5 274 V289M728.5 274 V289M729.5 271 V291M730.5 225 V289M731.5 269 V291M732.5 273 V291M733.5 273 V289M734.5 271 V292M735.5 271 V288M736.5 271 V289M737.5 271 V289M738.5 269 V288M739.5 222 V290M740.5 271 V289M741.5 271 V288M742.5 269 V289M743.5 272 V288M744.5 272 V288M745.5 271 V289M746.5 270 V291M747.5 227 V288M748.5 273 V289M749.5 271 V288M750.5 271 V290M751.5 271 V288M752.5 270 V286M753.5 272 V288M754.5 271 V290M755.5 248 V290M756.5 271 V289M757.5 271 V290M758.5 271 V289M759.5 270 V292M760.5 272 V289M761.5 271 V289M762.5 271 V291M763.5 233 V289M764.5 272 V291M765.5 271 V288M766.5 269 V288M767.5 271 V288M768.5 270 V291M769.5 249 V288M770.5 270 V289M771.5 271 V287M772.5 271 V288M773.5 270 V289M774.5 272 V288M775.5 270 V288M776.5 234 V288M777.5 271 V291M778.5 268 V287M779.5 269 V287M780.5 271 V287M781.5 269 V289M782.5 239 V289M783.5 270 V288M784.5 271 V288M785.5 268 V288M786.5 271 V290M787.5 270 V289M788.5 271 V287" stroke="#c8b400" stroke-width="1" fill="none" shape-rendering="crispEdges"/><path d="M0.8 259.6 L2.9 260.2 L4.9 260.8 L6.9 262.5 L8.8 262.4 L10.7 258.6 L12.6 260.6 L14.5 263.1 L16.3 255.2 L18.1 257.7 L19.9 259.7 L21.6 261.7 L23.3 259.5 L25.0 261.6 L26.7 260.8 L28.3 261.4 L29.9 256.7 L31.5 257.1 L33.1 256.5 L34.7 259.1 L36.2 260.7 L37.7 264.0 L39.2 263.3 L40.7 263.7 L42.1 266.3 L43.5 260.8 L45.0 257.7 L46.4 257.5 L47.7 257.7 L49.1 258.9 L50.5 259.8 L51.8 266.1 L53.1 262.6 L54.4 260.7 L55.7 260.8 L57.0 263.0 L58.2 265.0 L59.5 263.2 L60.7 262.7 L61.9 259.7 L63.2 256.5 L64.3 261.1 L65.5 262.9 L66.7 265.5 L67.9 265.1 L69.0 259.9 L70.1 261.7 L71.3 267.6 L72.4 263.8 L73.5 261.8 L74.6 260.4 L75.6 266.1 L76.7 262.2 L77.8 264.6 L78.8 262.9 L79.9 263.5 L80.9 264.8 L81.9 263.5 L82.9 268.1 L83.9 259.3 L84.9 267.0 L85.9 264.8 L86.9 263.6 L87.9 261.9 L88.8 267.0 L89.8 261.0 L90.7 261.7 L91.7 260.9 L92.6 267.0 L93.5 265.6 L94.5 267.1 L95.4 261.1 L96.3 265.0 L97.2 265.6 L98.1 265.9 L98.9 264.7 L99.8 262.1 L100.7 265.9 L101.5 265.4 L102.4 263.6 L103.2 266.7 L104.1 250.7 L104.9 249.9 L105.7 262.1 L106.6 259.5 L107.4 260.5 L108.2 266.0 L109.0 263.0 L109.8 266.4 L110.6 263.9 L111.4 265.2 L112.2 262.2 L113.0 264.4 L113.7 265.6 L114.5 264.2 L115.3 265.1 L116.0 264.2 L116.8 268.2 L117.5 268.1 L118.3 267.7 L119.0 266.1 L119.7 263.7 L120.5 263.2 L121.2 269.3 L121.9 264.7 L122.6 266.9 L123.3 262.4 L124.0 259.1 L124.7 264.6 L125.4 262.6 L126.1 263.5 L126.8 265.5 L127.5 265.4 L128.2 263.8 L128.9 264.0 L129.5 266.1 L130.2 266.3 L130.9 266.2 L131.5 266.1 L132.2 267.3 L132.8 266.0 L133.5 261.9 L134.1 260.8 L134.8 266.2 L135.4 267.5 L136.1 265.1 L136.7 268.3 L137.3 268.2 L137.9 269.9 L138.6 266.6 L139.2 268.7 L139.8 265.2 L140.4 266.6 L141.0 265.4 L141.6 266.3 L142.2 266.9 L142.8 266.7 L143.4 264.6 L144.0 266.7 L144.6 266.6 L145.2 270.4 L145.8 265.4 L146.3 263.1 L146.9 265.2 L147.5 268.7 L148.1 268.3 L148.6 267.8 L149.2 268.7 L149.8 266.5 L150.3 263.9 L150.9 271.6 L151.4 266.1 L152.0 263.7 L152.5 268.3 L153.1 266.6 L153.6 268.6 L154.2 269.0 L154.7 268.0 L155.3 265.8 L155.8 270.1 L156.3 267.4 L156.9 266.5 L157.4 268.4 L157.9 267.0 L158.4 268.6 L158.9 268.3 L159.5 269.6 L160.0 264.9 L160.5 267.6 L161.0 268.3 L161.5 267.5 L162.0 267.0 L162.5 270.2 L163.0 267.2 L163.5 267.6 L164.0 269.0M165.5 269 V271M166.0 271.7 L166.5 268.5 L167.0 272.1 L167.4 272.0 L167.9 271.0 L168.4 271.7 L168.9 269.0 L169.3 267.8 L169.8 265.4 L170.3 266.7 L170.8 266.8 L171.2 270.2 L171.7 272.5 L172.2 270.9 L172.6 269.0 L173.1 266.0M174.5 266 V271M174.9 268.9 L175.3 267.2 L175.8 271.4 L176.2 269.1 L176.7 266.4 L177.1 268.1M178.5 268 V271M178.9 268.9 L179.3 269.5 L179.7 265.9 L180.2 271.0M181.5 268 V272M181.9 266.6 L182.3 268.9 L182.7 268.4 L183.1 268.6M184.5 269 V274M184.8 272.1 L185.2 273.8M186.5 271 V275M186.9 270.8 L187.3 273.5M188.5 267 V275M188.9 273.0 L189.3 270.0M190.5 269 V276M190.9 273.7 L191.2 273.3M192.5 269 V274M192.8 270.6 L193.2 270.8M194.5 268 V274M195.5 268 V277M195.8 272.2 L196.2 276.7M197.5 269 V278M198.5 270 V274M198.8 273.4 L199.2 270.6M200.5 269 V273M201.5 269 V273M202.5 270 V275M203.5 269 V275M203.8 273.7 L204.2 270.2M205.5 270 V275M206.5 270 V275M207.5 270 V274M208.5 272 V276M209.5 270 V275M210.5 270 V272M211.5 271 V277M212.5 269 V277M213.5 272 V277M214.5 270 V277M215.5 270 V275M216.5 270 V276M217.5 273 V277M218.5 272 V278M219.5 272 V275M220.5 270 V276M221.5 272 V280M222.5 273 V276M223.5 274 V279M224.5 271 V278M225.5 272 V279M226.5 272 V276M227.5 273 V278M228.5 273 V279M229.5 271 V276M230.5 272 V277M231.5 272 V276M232.5 273 V278M233.5 271 V277M234.5 273 V277M235.5 273 V280M236.5 272 V276M237.5 272 V279M238.5 278 V282M239.5 276 V280M240.5 274 V278M241.5 274 V279M242.5 275 V279M243.5 273 V279M244.5 274 V279M245.5 273 V277M246.5 272 V277M247.5 272 V279M248.5 272 V278M249.5 271 V278M250.5 271 V280M251.5 270 V282M252.5 272 V278M253.5 274 V282M254.5 271 V279M255.5 273 V280M256.5 273 V280M257.5 273 V277M258.5 272 V277M259.5 273 V280M260.5 275 V280M261.5 274 V281M262.5 273 V279M263.5 273 V280M264.5 274 V280M265.5 272 V281M266.5 272 V281M267.5 275 V280M268.5 274 V280M269.5 272 V281M270.5 272 V281M271.5 271 V279M272.5 271 V281M273.5 271 V279M274.5 272 V282M275.5 272 V282M276.5 272 V280M277.5 273 V280M278.5 274 V279M279.5 274 V279M280.5 276 V280M281.5 274 V279M282.5 272 V279M283.5 274 V280M284.5 273 V280M285.5 272 V280M286.5 274 V279M287.5 274 V280M288.5 276 V280M289.5 272 V280M290.5 272 V279M291.5 273 V281M292.5 273 V279M293.5 273 V281M294.5 273 V283M295.5 273 V283M296.5 271 V280M297.5 273 V282M298.5 273 V281M299.5 271 V280M300.5 272 V280M301.5 273 V280M302.5 273 V281M303.5 275 V280M304.5 274 V280M305.5 271 V281M306.5 271 V280M307.5 272 V282M308.5 272 V281M309.5 275 V281M310.5 272 V279M311.5 273 V282M312.5 274 V282M313.5 273 V279M314.5 271 V282M315.5 276 V280M316.5 272 V280M317.5 275 V283M318.5 275 V282M319.5 274 V281M320.5 275 V281M321.5 272 V280M322.5 273 V280M323.5 274 V281M324.5 274 V281M325.5 272 V281M326.5 275 V281M327.5 274 V283M328.5 274 V284M329.5 275 V280M330.5 278 V283M331.5 274 V284M332.5 275 V283M333.5 272 V281M334.5 274 V282M335.5 274 V281M336.5 274 V283M337.5 275 V283M338.5 275 V280M339.5 274 V282M340.5 274 V281M341.5 275 V282M342.5 272 V281M343.5 272 V283M344.5 272 V282M345.5 274 V282M346.5 274 V283M347.5 273 V282M348.5 272 V284M349.5 271 V283M350.5 274 V283M351.5 273 V287M352.5 275 V284M353.5 273 V280M354.5 275 V284M355.5 275 V283M356.5 270 V283M357.5 276 V285M358.5 274 V284M359.5 273 V283M360.5 273 V282M361.5 273 V284M362.5 274 V284M363.5 275 V282M364.5 271 V282M365.5 277 V283M366.5 276 V283M367.5 272 V283M368.5 274 V284M369.5 271 V283M370.5 274 V283M371.5 273 V284M372.5 274 V283M373.5 275 V283M374.5 274 V285M375.5 274 V282M376.5 273 V286M377.5 275 V286M378.5 275 V288M379.5 275 V283M380.5 274 V283M381.5 275 V285M382.5 275 V282M383.5 276 V284M384.5 275 V283M385.5 276 V284M386.5 273 V284M387.5 273 V285M388.5 276 V287M389.5 276 V283M390.5 276 V284M391.5 274 V287M392.5 273 V284M393.5 274 V286M394.5 272 V283M395.5 275 V285M396.5 273 V285M397.5 274 V286M398.5 275 V285M399.5 273 V286M400.5 273 V290M401.5 276 V284M402.5 276 V287M403.5 276 V286M404.5 276 V286M405.5 276 V284M406.5 276 V286M407.5 276 V286M408.5 275 V285M409.5 273 V285M410.5 274 V285M411.5 275 V286M412.5 275 V286M413.5 276 V287M414.5 274 V285M415.5 273 V286M416.5 273 V285M417.5 276 V287M418.5 274 V286M419.5 275 V286M420.5 275 V285M421.5 274 V284M422.5 275 V284M423.5 276 V286M424.5 276 V287M425.5 274 V288M426.5 275 V285M427.5 271 V285M428.5 275 V288M429.5 277 V286M430.5 275 V287M431.5 277 V287M432.5 275 V286M433.5 274 V287M434.5 274 V287M435.5 276 V283M436.5 275 V288M437.5 274 V285M438.5 276 V286M439.5 275 V287M440.5 274 V286M441.5 276 V287M442.5 273 V290M443.5 276 V287M444.5 267 V280M445.5 254 V268M446.5 32 V255M447.5 135 V235M448.5 234 V267M449.5 266 V283M450.5 274 V287M451.5 276 V286M452.5 274 V287M453.5 275 V288M454.5 276 V286M455.5 275 V290M456.5 277 V286M457.5 276 V287M458.5 273 V289M459.5 276 V288M460.5 275 V286M461.5 273 V290M462.5 276 V288M463.5 275 V287M464.5 277 V289M465.5 275 V288M466.5 276 V290M467.5 276 V291M468.5 278 V287M469.5 274 V287M470.5 274 V287M471.5 276 V289M472.5 277 V288M473.5 273 V289M474.5 275 V290M475.5 277 V288M476.5 276 V287M477.5 275 V287M478.5 276 V292M479.5 276 V288M480.5 276 V287M481.5 274 V291M482.5 275 V290M483.5 274 V288M484.5 276 V290M485.5 274 V288M486.5 276 V286M487.5 277 V290M488.5 274 V290M489.5 276 V289M490.5 276 V287M491.5 278 V287M492.5 274 V290M493.5 274 V288M494.5 274 V290M495.5 273 V288M496.5 276 V289M497.5 277 V288M498.5 276 V289M499.5 273 V288M500.5 276 V290M501.5 274 V289M502.5 276 V288M503.5 274 V289M504.5 276 V288M505.5 276 V290M506.5 276 V290M507.5 275 V288M508.5 274 V289M509.5 274 V289M510.5 278 V292M511.5 277 V289M512.5 276 V290M513.5 273 V288M514.5 276 V288M515.5 276 V291M516.5 276 V290M517.5 276 V288M518.5 276 V290M519.5 274 V291M520.5 276 V290M521.5 278 V290M522.5 277 V291M523.5 273 V290M524.5 278 V290M525.5 202 V290M526.5 273 V290M527.5 275 V290M528.5 275 V290M529.5 273 V289M530.5 276 V288M531.5 277 V294M532.5 274 V292M533.5 273 V290M534.5 275 V290M535.5 278 V290M536.5 275 V289M537.5 275 V292M538.5 276 V288M539.5 275 V290M540.5 277 V290M541.5 275 V289M542.5 274 V293M543.5 278 V289M544.5 275 V290M545.5 275 V291M546.5 275 V292M547.5 276 V291M548.5 276 V288M549.5 277 V290M550.5 276 V290M551.5 275 V290M552.5 276 V288M553.5 277 V291M554.5 274 V293M555.5 275 V290M556.5 277 V291M557.5 277 V290M558.5 274 V291M559.5 273 V290M560.5 275 V290M561.5 275 V290M562.5 276 V290M563.5 274 V290M564.5 274 V291M565.5 276 V293M566.5 275 V293M567.5 274 V293M568.5 274 V290M569.5 275 V289M570.5 276 V295M571.5 276 V291M572.5 176 V291M573.5 276 V290M574.5 274 V292M575.5 273 V292M576.5 273 V293M577.5 274 V291M578.5 276 V291M579.5 277 V291M580.5 277 V292M581.5 273 V294M582.5 277 V291M583.5 276 V294M584.5 276 V292M585.5 277 V291M586.5 277 V293M587.5 276 V291M588.5 275 V293M589.5 277 V292M590.5 276 V291M591.5 276 V291M592.5 278 V291M593.5 278 V291M594.5 273 V293M595.5 277 V292M596.5 273 V293M597.5 275 V290M598.5 274 V291M599.5 277 V292M600.5 276 V291M601.5 276 V295M602.5 277 V292M603.5 275 V293M604.5 212 V291M605.5 277 V293M606.5 272 V292M607.5 274 V291M608.5 276 V290M609.5 276 V296M610.5 277 V291M611.5 277 V290M612.5 276 V292M613.5 274 V293M614.5 276 V290M615.5 276 V292M616.5 271 V291M617.5 276 V291M618.5 276 V290M619.5 276 V290M620.5 272 V293M621.5 275 V293M622.5 275 V292M623.5 276 V293M624.5 273 V294M625.5 275 V293M626.5 275 V292M627.5 275 V292M628.5 270 V292M629.5 275 V291M630.5 227 V291M631.5 274 V290M632.5 276 V291M633.5 274 V294M634.5 275 V294M635.5 273 V291M636.5 274 V293M637.5 274 V292M638.5 275 V292M639.5 276 V292M640.5 272 V291M641.5 277 V292M642.5 277 V294M643.5 275 V291M644.5 276 V293M645.5 275 V291M646.5 275 V291M647.5 275 V291M648.5 275 V291M649.5 276 V293M650.5 277 V292M651.5 208 V293M652.5 275 V293M653.5 271 V292M654.5 275 V293M655.5 277 V294M656.5 276 V291M657.5 276 V290M658.5 274 V291M659.5 274 V292M660.5 274 V291M661.5 277 V293M662.5 275 V291M663.5 275 V291M664.5 275 V291M665.5 275 V291M666.5 276 V292M667.5 274 V293M668.5 223 V291M669.5 276 V291M670.5 276 V290M671.5 275 V291M672.5 273 V293M673.5 275 V291M674.5 274 V291M675.5 274 V291M676.5 271 V290M677.5 274 V292M678.5 274 V292M679.5 275 V291M680.5 274 V292M681.5 274 V292M682.5 273 V290M683.5 223 V291M684.5 276 V289M685.5 275 V292M686.5 274 V292M687.5 273 V291M688.5 274 V293M689.5 274 V292M690.5 273 V292M691.5 272 V292M692.5 274 V292M693.5 271 V293M694.5 273 V290M695.5 274 V291M696.5 274 V290M697.5 206 V291M698.5 275 V291M699.5 274 V294M700.5 274 V291M701.5 275 V290M702.5 273 V290M703.5 274 V290M704.5 272 V289M705.5 274 V291M706.5 273 V290M707.5 274 V291M708.5 270 V292M709.5 235 V291M710.5 273 V291M711.5 273 V291M712.5 273 V290M713.5 273 V292M714.5 275 V291M715.5 272 V290M716.5 272 V292M717.5 272 V291M718.5 273 V291M719.5 273 V292M720.5 212 V289M721.5 272 V293M722.5 273 V292M723.5 271 V291M724.5 272 V290M725.5 271 V290M726.5 273 V294M727.5 274 V289M728.5 272 V290M729.5 273 V290M730.5 226 V289M731.5 271 V290M732.5 271 V293M733.5 271 V291M734.5 273 V291M735.5 272 V289M736.5 272 V292M737.5 272 V291M738.5 271 V290M739.5 223 V291M740.5 270 V290M741.5 272 V289M742.5 269 V291M743.5 272 V291M744.5 270 V290M745.5 271 V290M746.5 272 V292M747.5 228 V290M748.5 273 V289M749.5 270 V292M750.5 272 V289M751.5 270 V290M752.5 269 V290M753.5 273 V288M754.5 272 V290M755.5 249 V289M756.5 273 V288M757.5 269 V289M758.5 270 V291M759.5 272 V290M760.5 271 V289M761.5 273 V289M762.5 273 V290M763.5 234 V289M764.5 271 V290M765.5 270 V289M766.5 273 V289M767.5 271 V290M768.5 270 V289M769.5 253 V289M770.5 273 V289M771.5 271 V290M772.5 268 V290M773.5 270 V290M774.5 272 V289M775.5 270 V289M776.5 235 V291M777.5 270 V290M778.5 269 V289M779.5 270 V291M780.5 271 V288M781.5 270 V290M782.5 240 V291M783.5 271 V288M784.5 270 V289M785.5 271 V289M786.5 272 V290M787.5 271 V288M788.5 270 V287" stroke="#00ff00" stroke-width="1" fill="none" shape-rendering="crispEdges"/><path d="M0.8 40.9 L2.9 37.1 L4.9 41.0 L6.9 47.5 L8.8 47.1 L10.7 42.8 L12.6 46.8 L14.5 45.8 L16.3 48.8 L18.1 42.0 L19.9 45.1 L21.6 42.3 L23.3 45.0 L25.0 44.2 L26.7 47.0 L28.3 37.5 L29.9 38.8 L31.5 41.9 L33.1 44.2 L34.7 42.3 L36.2 41.2 L37.7 39.3 L39.2 37.9 L40.7 40.5 L42.1 40.9 L43.5 42.4 L45.0 41.1 L46.4 35.6 L47.7 41.7 L49.1 39.0 L50.5 46.4 L51.8 38.9 L53.1 41.5 L54.4 52.0 L55.7 42.6 L57.0 38.7 L58.2 47.9 L59.5 47.3 L60.7 39.8 L61.9 43.3 L63.2 50.1 L64.3 40.3 L65.5 36.0 L66.7 45.1 L67.9 42.2 L69.0 38.7 L70.1 43.6 L71.3 43.4 L72.4 46.3 L73.5 47.9 L74.6 41.1 L75.6 40.0 L76.7 43.9 L77.8 46.0 L78.8 48.6 L79.9 46.6 L80.9 43.0 L81.9 43.0 L82.9 39.9 L83.9 43.1 L84.9 34.9 L85.9 40.1 L86.9 42.6 L87.9 46.0 L88.8 41.7 L89.8 41.1 L90.7 39.4 L91.7 41.3 L92.6 43.1 L93.5 42.4 L94.5 41.3 L95.4 40.0 L96.3 41.5 L97.2 39.1 L98.1 39.7 L98.9 39.6 L99.8 41.5 L100.7 42.4 L101.5 39.5 L102.4 44.4 L103.2 45.1 L104.1 42.9 L104.9 44.2 L105.7 47.2 L106.6 41.6 L107.4 42.0 L108.2 41.3 L109.0 47.8 L109.8 42.3 L110.6 40.0 L111.4 47.6 L112.2 37.9 L113.0 47.3 L113.7 40.1 L114.5 35.9 L115.3 41.0 L116.0 46.1 L116.8 38.4 L117.5 46.1 L118.3 42.9 L119.0 44.9 L119.7 46.0 L120.5 39.0 L121.2 44.8 L121.9 39.4 L122.6 40.2 L123.3 42.0 L124.0 42.8 L124.7 41.3 L125.4 48.8 L126.1 41.3 L126.8 42.0 L127.5 38.6 L128.2 43.2 L128.9 41.3 L129.5 40.0 L130.2 46.7 L130.9 45.3 L131.5 41.8 L132.2 41.4 L132.8 40.5 L133.5 41.4 L134.1 40.3 L134.8 44.8 L135.4 39.3 L136.1 48.8 L136.7 39.8 L137.3 43.4 L137.9 48.3 L138.6 41.5 L139.2 48.1 L139.8 42.2 L140.4 41.7 L141.0 45.3 L141.6 39.2 L142.2 45.8 L142.8 44.7 L143.4 42.7 L144.0 45.4 L144.6 37.9 L145.2 44.0 L145.8 41.2 L146.3 46.4 L146.9 43.3 L147.5 44.0 L148.1 43.5 L148.6 39.9 L149.2 41.4 L149.8 40.7 L150.3 50.5 L150.9 38.0 L151.4 40.9 L152.0 43.0 L152.5 47.7 L153.1 45.3 L153.6 45.7 L154.2 40.0 L154.7 45.1 L155.3 39.9 L155.8 42.6 L156.3 41.7 L156.9 43.2 L157.4 34.0 L157.9 41.1 L158.4 33.5 L158.9 50.3 L159.5 37.1 L160.0 43.4 L160.5 45.3 L161.0 53.0 L161.5 49.5 L162.0 41.7 L162.5 45.5 L163.0 42.7 L163.5 47.6 L164.0 43.0M165.5 43 V47M166.0 45.2 L166.5 40.9 L167.0 48.7 L167.4 41.9 L167.9 40.8 L168.4 38.7 L168.9 45.6 L169.3 48.2 L169.8 42.4 L170.3 45.4 L170.8 47.8 L171.2 40.2 L171.7 43.2 L172.2 46.9 L172.6 40.0 L173.1 41.2M174.5 41 V47M174.9 45.3 L175.3 45.1 L175.8 46.3 L176.2 37.8 L176.7 39.4 L177.1 44.9M178.5 44 V49M178.9 38.4 L179.3 41.3 L179.7 33.3 L180.2 37.5M181.5 34 V41M181.9 43.7 L182.3 46.1 L182.7 45.5 L183.1 41.5M184.5 41 V50M184.8 44.0 L185.2 47.7M186.5 41 V49M186.9 41.7 L187.3 37.0M188.5 37 V47M188.9 40.5 L189.3 47.0M190.5 42 V50M190.9 45.0 L191.2 49.0M192.5 39 V50M192.8 42.4 L193.2 44.5M194.5 38 V51M195.5 44 V51M195.8 42.7 L196.2 44.8M197.5 40 V46M198.5 41 V49M198.8 43.5 L199.2 48.3M200.5 42 V52M201.5 40 V52M202.5 43 V48M203.5 37 V46M203.8 43.3 L204.2 44.6M205.5 40 V49M206.5 41 V49M207.5 38 V47M208.5 38 V44M209.5 40 V48M210.5 41 V45M211.5 40 V50M212.5 39 V46M213.5 37 V45M214.5 40 V52M215.5 41 V45M216.5 43 V48M217.5 42 V48M218.5 42 V51M219.5 41 V45M220.5 39 V43M221.5 42 V47M222.5 42 V47M223.5 39 V51M224.5 39 V48M225.5 38 V48M226.5 44 V48M227.5 37 V47M228.5 41 V45M229.5 38 V47M230.5 38 V51M231.5 41 V51M232.5 41 V46M233.5 41 V48M234.5 39 V48M235.5 36 V47M236.5 40 V50M237.5 40 V50M238.5 37 V48M239.5 36 V45M240.5 36 V52M241.5 38 V52M242.5 35 V46M243.5 40 V47M244.5 41 V49M245.5 41 V46M246.5 36 V44M247.5 38 V51M248.5 38 V50M249.5 39 V50M250.5 39 V50M251.5 41 V50M252.5 41 V47M253.5 40 V47M254.5 37 V49M255.5 39 V46M256.5 37 V47M257.5 40 V48M258.5 42 V48M259.5 31 V49M260.5 43 V47M261.5 41 V46M262.5 35 V46M263.5 41 V46M264.5 45 V48M265.5 37 V47M266.5 37 V54M267.5 40 V47M268.5 43 V51M269.5 31 V48M270.5 31 V48M271.5 40 V48M272.5 39 V52M273.5 39 V50M274.5 39 V46M275.5 38 V46M276.5 37 V47M277.5 37 V47M278.5 40 V49M279.5 35 V52M280.5 41 V47M281.5 39 V47M282.5 39 V46M283.5 40 V48M284.5 41 V51M285.5 36 V48M286.5 36 V44M287.5 35 V45M288.5 35 V50M289.5 39 V48M290.5 32 V46M291.5 37 V53M292.5 42 V53M293.5 38 V47M294.5 36 V48M295.5 37 V45M296.5 37 V48M297.5 37 V48M298.5 41 V49M299.5 41 V49M300.5 37 V48M301.5 38 V49M302.5 40 V49M303.5 39 V51M304.5 40 V49M305.5 38 V50M306.5 39 V53M307.5 38 V51M308.5 38 V46M309.5 38 V49M310.5 40 V51M311.5 40 V50M312.5 40 V51M313.5 39 V50M314.5 40 V53M315.5 41 V53M316.5 38 V50M317.5 34 V48M318.5 41 V52M319.5 39 V52M320.5 40 V55M321.5 37 V48M322.5 37 V48M323.5 39 V50M324.5 35 V47M325.5 35 V45M326.5 37 V52M327.5 40 V52M328.5 41 V50M329.5 34 V52M330.5 37 V49M331.5 37 V48M332.5 37 V50M333.5 37 V50M334.5 40 V47M335.5 38 V49M336.5 33 V47M337.5 38 V47M338.5 38 V49M339.5 41 V51M340.5 37 V51M341.5 37 V49M342.5 34 V46M343.5 38 V51M344.5 40 V48M345.5 38 V50M346.5 42 V49M347.5 41 V50M348.5 35 V56M349.5 33 V47M350.5 39 V56M351.5 31 V47M352.5 34 V49M353.5 39 V48M354.5 36 V48M355.5 39 V49M356.5 40 V51M357.5 37 V53M358.5 39 V53M359.5 36 V46M360.5 38 V53M361.5 39 V50M362.5 37 V57M363.5 37 V53M364.5 40 V56M365.5 35 V49M366.5 36 V47M367.5 37 V50M368.5 37 V48M369.5 37 V56M370.5 35 V51M371.5 35 V50M372.5 37 V51M373.5 35 V52M374.5 41 V52M375.5 36 V50M376.5 37 V54M377.5 33 V51M378.5 38 V53M379.5 39 V53M380.5 40 V52M381.5 37 V52M382.5 37 V49M383.5 38 V49M384.5 38 V50M385.5 36 V49M386.5 38 V53M387.5 39 V52M388.5 33 V50M389.5 35 V50M390.5 37 V49M391.5 37 V52M392.5 36 V48M393.5 31 V50M394.5 40 V52M395.5 34 V52M396.5 38 V54M397.5 36 V50M398.5 34 V51M399.5 39 V50M400.5 32 V52M401.5 34 V47M402.5 35 V50M403.5 35 V50M404.5 37 V52M405.5 35 V52M406.5 35 V49M407.5 38 V52M408.5 39 V49M409.5 39 V52M410.5 38 V50M411.5 37 V54M412.5 36 V53M413.5 38 V54M414.5 38 V49M415.5 38 V52M416.5 36 V49M417.5 35 V55M418.5 37 V53M419.5 38 V47M420.5 39 V52M421.5 34 V48M422.5 34 V53M423.5 36 V51M424.5 36 V50M425.5 35 V48M426.5 35 V49M427.5 33 V54M428.5 35 V51M429.5 35 V52M430.5 38 V52M431.5 37 V52M432.5 35 V54M433.5 32 V50M434.5 32 V51M435.5 38 V53M436.5 37 V53M437.5 39 V53M438.5 39 V54M439.5 36 V51M440.5 39 V50M441.5 38 V48M442.5 38 V48M443.5 39 V47M444.5 40 V47M445.5 41 V46M446.5 42 V45M447.5 41 V44M448.5 42 V46M449.5 39 V46M450.5 40 V48M451.5 39 V51M452.5 35 V50M453.5 36 V50M454.5 36 V53M455.5 36 V47M456.5 36 V50M457.5 32 V51M458.5 36 V52M459.5 34 V50M460.5 33 V53M461.5 36 V54M462.5 36 V54M463.5 30 V54M464.5 34 V49M465.5 34 V56M466.5 33 V52M467.5 37 V52M468.5 33 V52M469.5 34 V53M470.5 36 V56M471.5 35 V52M472.5 34 V50M473.5 38 V51M474.5 34 V52M475.5 36 V55M476.5 35 V52M477.5 37 V51M478.5 32 V51M479.5 36 V50M480.5 35 V50M481.5 38 V51M482.5 37 V53M483.5 35 V51M484.5 36 V49M485.5 35 V54M486.5 32 V50M487.5 36 V52M488.5 34 V54M489.5 35 V54M490.5 34 V51M491.5 33 V52M492.5 33 V51M493.5 37 V50M494.5 36 V51M495.5 32 V52M496.5 33 V53M497.5 36 V50M498.5 36 V51M499.5 36 V51M500.5 36 V53M501.5 35 V52M502.5 36 V51M503.5 36 V53M504.5 34 V56M505.5 32 V52M506.5 35 V53M507.5 36 V52M508.5 33 V52M509.5 35 V55M510.5 37 V53M511.5 35 V52M512.5 32 V55M513.5 32 V54M514.5 33 V50M515.5 36 V56M516.5 34 V56M517.5 33 V56M518.5 33 V52M519.5 33 V52M520.5 36 V50M521.5 35 V54M522.5 35 V54M523.5 31 V53M524.5 28 V53M525.5 36 V52M526.5 35 V53M527.5 35 V51M528.5 32 V52M529.5 37 V56M530.5 36 V52M531.5 36 V52M532.5 35 V51M533.5 35 V53M534.5 32 V54M535.5 35 V59M536.5 33 V50M537.5 35 V51M538.5 35 V55M539.5 35 V52M540.5 35 V51M541.5 33 V53M542.5 34 V51M543.5 33 V52M544.5 34 V54M545.5 37 V53M546.5 33 V54M547.5 36 V55M548.5 33 V52M549.5 32 V54M550.5 33 V54M551.5 36 V52M552.5 35 V54M553.5 32 V55M554.5 35 V55M555.5 35 V53M556.5 35 V53M557.5 35 V52M558.5 31 V53M559.5 34 V53M560.5 31 V52M561.5 33 V53M562.5 33 V51M563.5 34 V53M564.5 34 V49M565.5 33 V52M566.5 31 V54M567.5 31 V51M568.5 34 V52M569.5 34 V50M570.5 33 V52M571.5 35 V51M572.5 35 V53M573.5 34 V50M574.5 33 V60M575.5 36 V50M576.5 34 V53M577.5 34 V52M578.5 33 V53M579.5 28 V55M580.5 32 V53M581.5 34 V54M582.5 34 V54M583.5 34 V58M584.5 34 V53M585.5 33 V52M586.5 34 V51M587.5 35 V55M588.5 34 V54M589.5 34 V54M590.5 32 V52M591.5 31 V54M592.5 34 V54M593.5 33 V51M594.5 35 V53M595.5 33 V55M596.5 33 V54M597.5 33 V52M598.5 33 V51M599.5 34 V56M600.5 35 V56M601.5 29 V56M602.5 32 V53M603.5 33 V53M604.5 31 V53M605.5 34 V55M606.5 30 V53M607.5 31 V51M608.5 33 V54M609.5 32 V53M610.5 34 V53M611.5 35 V55M612.5 33 V50M613.5 34 V51M614.5 32 V54M615.5 33 V50M616.5 31 V55M617.5 34 V55M618.5 34 V54M619.5 32 V55M620.5 33 V52M621.5 34 V55M622.5 34 V53M623.5 31 V56M624.5 30 V52M625.5 33 V51M626.5 33 V55M627.5 34 V56M628.5 33 V53M629.5 33 V51M630.5 32 V52M631.5 33 V51M632.5 31 V54M633.5 33 V56M634.5 35 V55M635.5 34 V53M636.5 32 V55M637.5 30 V55M638.5 34 V56M639.5 33 V57M640.5 32 V54M641.5 32 V53M642.5 31 V52M643.5 34 V51M644.5 35 V53M645.5 32 V52M646.5 36 V56M647.5 32 V51M648.5 31 V55M649.5 36 V54M650.5 32 V52M651.5 33 V54M652.5 34 V54M653.5 33 V53M654.5 31 V53M655.5 31 V54M656.5 30 V53M657.5 33 V52M658.5 31 V54M659.5 34 V55M660.5 31 V56M661.5 34 V53M662.5 31 V56M663.5 31 V58M664.5 31 V52M665.5 33 V54M666.5 31 V54M667.5 33 V53M668.5 28 V55M669.5 33 V55M670.5 32 V54M671.5 33 V55M672.5 33 V54M673.5 34 V56M674.5 30 V53M675.5 30 V54M676.5 32 V55M677.5 33 V54M678.5 32 V53M679.5 33 V53M680.5 33 V55M681.5 32 V55M682.5 32 V54M683.5 30 V53M684.5 32 V53M685.5 31 V55M686.5 30 V54M687.5 32 V56M688.5 33 V55M689.5 27 V54M690.5 29 V55M691.5 33 V53M692.5 33 V56M693.5 32 V56M694.5 33 V53M695.5 34 V57M696.5 28 V53M697.5 33 V58M698.5 32 V52M699.5 32 V56M700.5 31 V54M701.5 30 V55M702.5 32 V54M703.5 32 V54M704.5 32 V53M705.5 34 V54M706.5 33 V54M707.5 30 V55M708.5 33 V54M709.5 32 V56M710.5 31 V55M711.5 32 V54M712.5 33 V55M713.5 30 V56M714.5 32 V56M715.5 26 V55M716.5 31 V54M717.5 33 V55M718.5 31 V52M719.5 33 V55M720.5 31 V54M721.5 31 V58M722.5 34 V54M723.5 30 V56M724.5 31 V57M725.5 31 V55M726.5 32 V56M727.5 31 V57M728.5 34 V56M729.5 31 V56M730.5 30 V55M731.5 34 V54M732.5 31 V56M733.5 31 V54M734.5 32 V53M735.5 31 V55M736.5 31 V54M737.5 33 V55M738.5 33 V53M739.5 33 V55M740.5 28 V56M741.5 29 V54M742.5 30 V57M743.5 32 V54M744.5 34 V54M745.5 32 V55M746.5 30 V55M747.5 30 V54M748.5 32 V55M749.5 29 V55M750.5 33 V54M751.5 30 V55M752.5 27 V55M753.5 32 V57M754.5 29 V56M755.5 32 V54M756.5 31 V54M757.5 32 V55M758.5 31 V56M759.5 32 V54M760.5 32 V54M761.5 32 V54M762.5 31 V55M763.5 32 V58M764.5 32 V54M765.5 31 V55M766.5 33 V53M767.5 31 V56M768.5 29 V58M769.5 31 V55M770.5 31 V54M771.5 32 V56M772.5 32 V60M773.5 29 V58M774.5 30 V54M775.5 31 V60M776.5 32 V57M777.5 29 V56M778.5 29 V54M779.5 31 V58M780.5 28 V56M781.5 30 V57M782.5 33 V57M783.5 30 V55M784.5 27 V53M785.5 30 V55M786.5 29 V54M787.5 32 V59M788.5 30 V57" stroke="#ffff80" stroke-width="1" fill="none" shape-rendering="crispEdges"/><rect x="525" y="5" width="1" height="28" fill="#ffff80"/><rect x="572" y="1" width="1" height="376" fill="#c0c000"/></svg><div style="left:855px;top:461px;width:5px;height:5px;background:#ffff80;"></div><div style="left:855px;top:479px;width:5px;height:5px;background:#c8c000;"></div><div style="left:855px;top:497px;width:5px;height:5px;background:#00ff00;"></div>
<svg width="0" height="0" style="position:absolute"><filter id="bin" color-interpolation-filters="sRGB"><feComponentTransfer><feFuncA type="discrete" tableValues="0 0 0 0 0 0 0 0 0 1 1 1 1 1 1 1 1 1 1 1"/></feComponentTransfer></filter></svg>
<div style="left:0;top:0;width:960px;height:594px;filter:url(#bin)"><span style="left:24px;top:7px;font-size:11px;line-height:13px;color:#fff;font-weight:bold;letter-spacing:0.6px;">Untitled - Arta</span><span style="left:10px;top:26px;font-size:11px;line-height:13px;color:#000;font-weight:normal;letter-spacing:-0.2px;">File</span><span style="left:38px;top:26px;font-size:11px;line-height:13px;color:#000;font-weight:normal;letter-spacing:-0.2px;">Overlay</span><span style="left:88px;top:26px;font-size:11px;line-height:13px;color:#000;font-weight:normal;letter-spacing:-0.2px;">Edit</span><span style="left:118px;top:26px;font-size:11px;line-height:13px;color:#000;font-weight:normal;letter-spacing:-0.2px;">View</span><span style="left:152px;top:26px;font-size:11px;line-height:13px;color:#000;font-weight:normal;letter-spacing:-0.2px;">Recorder</span><span style="left:207px;top:26px;font-size:11px;line-height:13px;color:#000;font-weight:normal;letter-spacing:-0.2px;">Generator</span><span style="left:269px;top:26px;font-size:11px;line-height:13px;color:#000;font-weight:normal;letter-spacing:-0.2px;">Setup</span><span style="left:309px;top:26px;font-size:11px;line-height:13px;color:#000;font-weight:normal;letter-spacing:-0.2px;">Tools</span><span style="left:346px;top:26px;font-size:11px;line-height:13px;color:#000;font-weight:normal;letter-spacing:-0.2px;">Mode</span><span style="left:384px;top:26px;font-size:11px;line-height:13px;color:#000;font-weight:normal;letter-spacing:-0.2px;">Help</span><span style="left:12px;top:76px;font-size:11px;line-height:13px;color:#000;font-weight:normal;">Gen</span><span style="left:132px;top:76px;font-size:11px;line-height:13px;color:#000;font-weight:normal;">Fs(Hz)</span><span style="left:240px;top:76px;font-size:11px;line-height:13px;color:#000;font-weight:normal;">FFT</span><span style="left:336px;top:76px;font-size:11px;line-height:13px;color:#000;font-weight:normal;">Wnd</span><span style="left:451px;top:76px;font-size:11px;line-height:13px;color:#000;font-weight:normal;">Avg</span><span style="left:43px;top:76px;font-size:11px;line-height:13px;color:#000;font-weight:normal;">Sine</span><span style="left:172px;top:76px;font-size:11px;line-height:13px;color:#000;font-weight:normal;">48000</span><span style="left:268px;top:76px;font-size:11px;line-height:13px;color:#000;font-weight:normal;">131072</span><span style="left:368px;top:76px;font-size:11px;line-height:13px;color:#000;font-weight:normal;">Hanning</span><span style="left:482px;top:76px;font-size:11px;line-height:13px;color:#000;font-weight:normal;">Linear</span><span style="left:554px;top:76px;font-size:11px;line-height:13px;color:#000;font-weight:normal;">Reset</span><span style="left:922px;top:100px;font-size:11px;line-height:13px;color:#000;font-weight:normal;">Top</span><span style="left:925px;top:166px;font-size:11px;line-height:13px;color:#000;font-weight:normal;">Fit</span><span style="left:915px;top:197px;font-size:11px;line-height:13px;color:#000;font-weight:normal;">Range</span><span style="left:923px;top:268px;font-size:11px;line-height:13px;color:#000;font-weight:normal;">Set</span><span style="left:915px;top:300px;font-size:11px;line-height:13px;color:#000;font-weight:normal;">FrHigh</span><span style="left:918px;top:345px;font-size:11px;line-height:13px;color:#000;font-weight:normal;">FrLow</span><span style="left:6px;top:576px;font-size:11px;line-height:13px;color:#000;font-weight:normal;">Ready</span><span style="left:637px;top:576px;font-size:11px;line-height:13px;color:#000;font-weight:normal;">L:-29.6dB</span><span style="left:711px;top:576px;font-size:11px;line-height:13px;color:#000;font-weight:normal;">R:-83.3dB</span><span style="left:787px;top:576px;font-size:11px;line-height:13px;color:#000;font-weight:normal;">Spectrum Analyzer</span><span style="left:64px;top:118px;font-size:13px;line-height:15px;color:#000;font-weight:normal;">Spectrum magnitude dBV</span><span style="right:111px;top:120px;font-size:12px;line-height:14px;color:#000;font-weight:normal;letter-spacing:-0.2px;">Left&nbsp; Avg:20</span><span style="right:903px;top:131px;font-size:12px;line-height:14px;color:#000;font-weight:normal;">20.0</span><span style="right:903px;top:173px;font-size:12px;line-height:14px;color:#000;font-weight:normal;">0.0</span><span style="right:903px;top:215px;font-size:12px;line-height:14px;color:#000;font-weight:normal;">-20.0</span><span style="right:903px;top:257px;font-size:12px;line-height:14px;color:#000;font-weight:normal;">-40.0</span><span style="right:903px;top:299px;font-size:12px;line-height:14px;color:#000;font-weight:normal;">-60.0</span><span style="right:903px;top:340px;font-size:12px;line-height:14px;color:#000;font-weight:normal;">-80.0</span><span style="right:903px;top:382px;font-size:12px;line-height:14px;color:#000;font-weight:normal;">-100.0</span><span style="right:903px;top:424px;font-size:12px;line-height:14px;color:#000;font-weight:normal;">-120.0</span><span style="right:903px;top:466px;font-size:12px;line-height:14px;color:#000;font-weight:normal;">-140.0</span><span style="right:903px;top:508px;font-size:12px;line-height:14px;color:#000;font-weight:normal;">-160.0</span><span style="left:-38px;width:200px;text-align:center;top:523px;font-size:12px;line-height:14px;color:#000;font-weight:normal;">20</span><span style="left:67px;width:200px;text-align:center;top:523px;font-size:12px;line-height:14px;color:#000;font-weight:normal;">50</span><span style="left:146px;width:200px;text-align:center;top:523px;font-size:12px;line-height:14px;color:#000;font-weight:normal;">100</span><span style="left:225px;width:200px;text-align:center;top:523px;font-size:12px;line-height:14px;color:#000;font-weight:normal;">200</span><span style="left:329px;width:200px;text-align:center;top:523px;font-size:12px;line-height:14px;color:#000;font-weight:normal;">500</span><span style="left:408px;width:200px;text-align:center;top:523px;font-size:12px;line-height:14px;color:#000;font-weight:normal;">1k</span><span style="left:487px;width:200px;text-align:center;top:523px;font-size:12px;line-height:14px;color:#000;font-weight:normal;">2k</span><span style="left:592px;width:200px;text-align:center;top:523px;font-size:12px;line-height:14px;color:#000;font-weight:normal;">5k</span><span style="left:671px;width:200px;text-align:center;top:523px;font-size:12px;line-height:14px;color:#000;font-weight:normal;">10k</span><span style="left:750px;width:200px;text-align:center;top:523px;font-size:12px;line-height:14px;color:#000;font-weight:normal;">20k</span><span style="left:855px;top:139px;font-size:12px;line-height:14px;color:#000;font-weight:normal;">A</span><span style="left:855px;top:153px;font-size:12px;line-height:14px;color:#000;font-weight:normal;">R</span><span style="left:855px;top:167px;font-size:12px;line-height:14px;color:#000;font-weight:normal;">T</span><span style="left:855px;top:181px;font-size:12px;line-height:14px;color:#000;font-weight:normal;">A</span><span style="left:861px;top:456px;font-size:12px;line-height:14px;color:#000;font-weight:normal;">Diff</span><span style="left:861px;top:474px;font-size:12px;line-height:14px;color:#000;font-weight:normal;">Over</span><span style="left:861px;top:492px;font-size:12px;line-height:14px;color:#000;font-weight:normal;">Magn</span><span style="left:62px;top:537px;font-size:12px;line-height:14px;color:#000;font-weight:normal;letter-spacing:0.1px;">Cursor: 3000.00 Hz, -64.00 dB,&nbsp; Diff=-0.25</span><span style="left:62px;top:555px;font-size:12px;line-height:14px;color:#c80000;font-weight:normal;">RMS =</span><span style="left:107px;top:555px;font-size:12px;line-height:14px;color:#c80000;font-weight:normal;">+6.6 dBV</span><span style="left:168px;top:555px;font-size:12px;line-height:14px;color:#c80000;font-weight:normal;">THD =0.035%</span><span style="left:257px;top:555px;font-size:12px;line-height:14px;color:#c80000;font-weight:normal;">THD+N =0.038%</span><span style="left:771px;top:537px;font-size:12px;line-height:14px;color:#000;font-weight:normal;">Frequency(Hz)</span></div>
</body></html>
